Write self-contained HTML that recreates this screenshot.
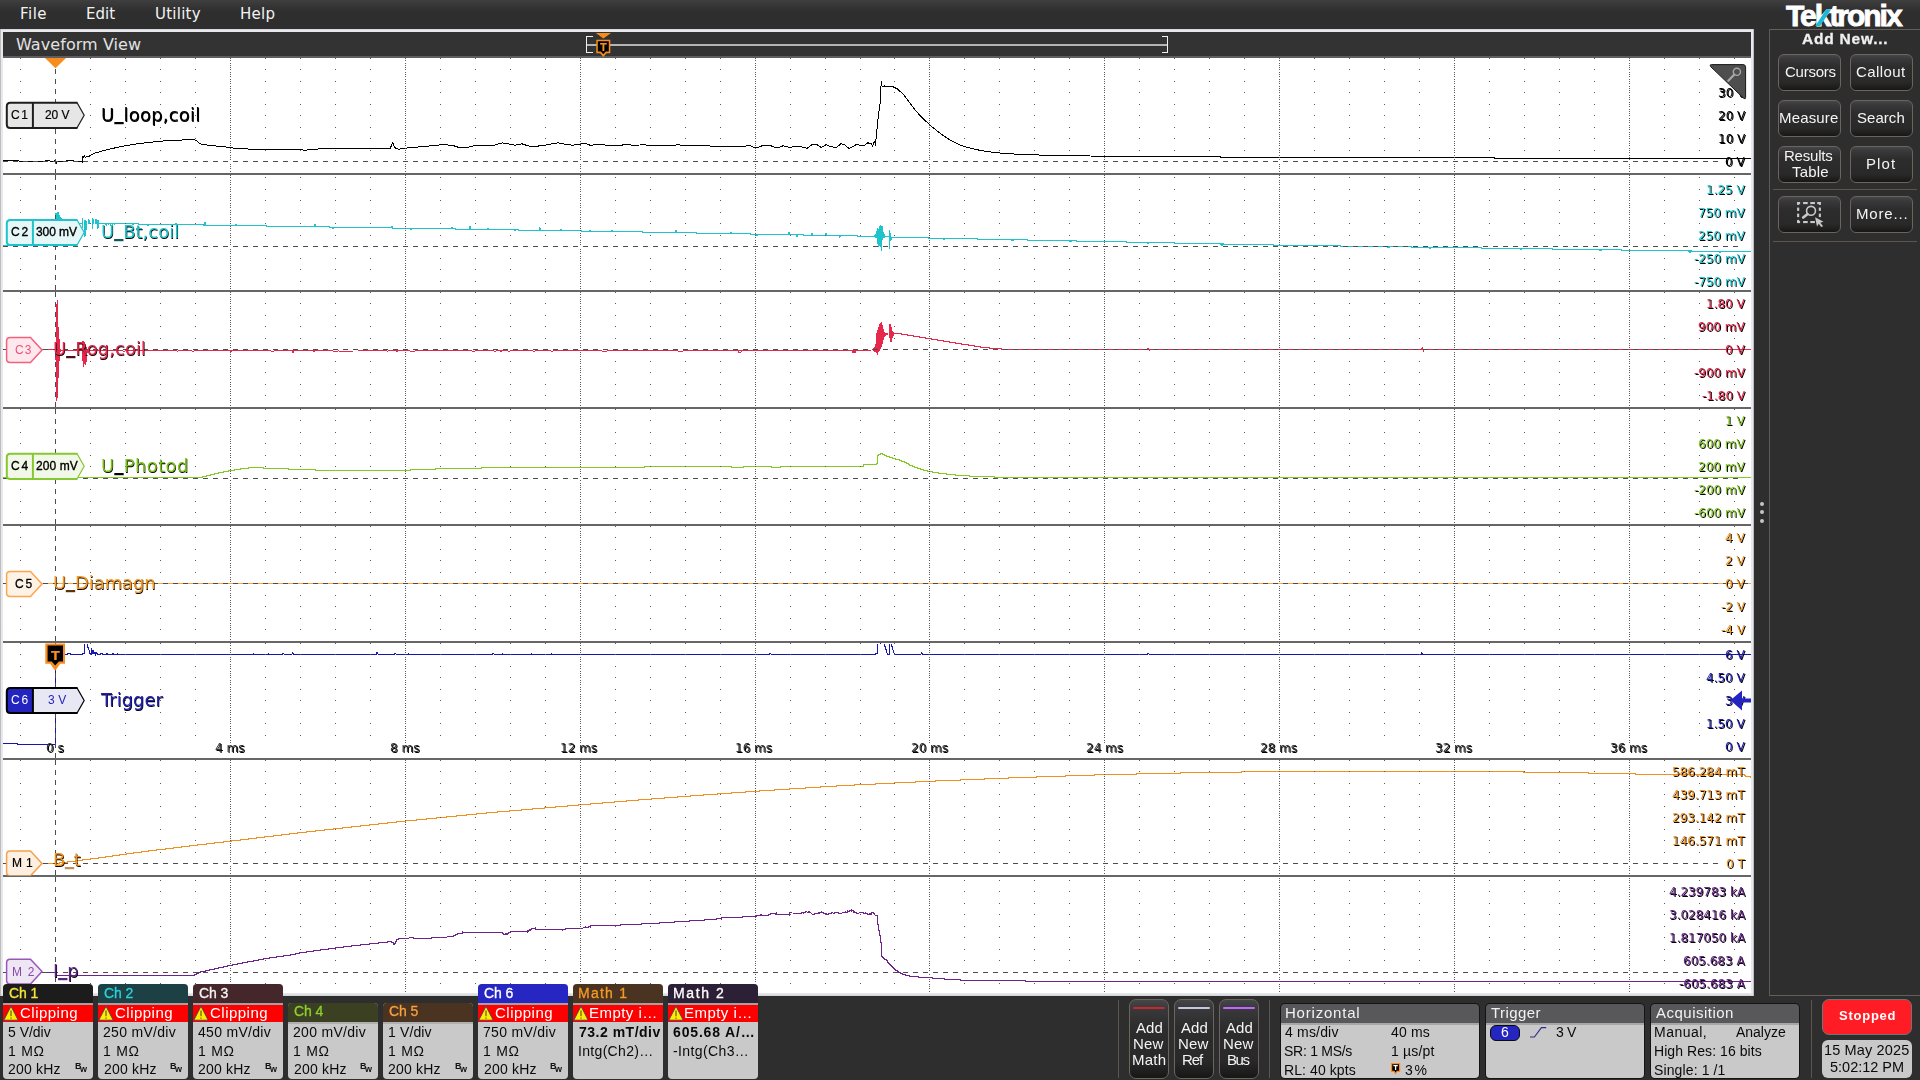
<!DOCTYPE html>
<html lang="en"><head><meta charset="utf-8"><title>Waveform View</title>
<style>
html,body{margin:0;padding:0}
body{width:1920px;height:1080px;background:#2e2e2e;position:relative;overflow:hidden;font-family:"Liberation Sans","DejaVu Sans",sans-serif}
div,.abs,.t{position:absolute}
.t{white-space:pre;display:block}
#menubar{left:0;top:0;width:1920px;height:28px;background:linear-gradient(#3f3f3f 0,#373737 5px,#303030 10px,#2e2e2e 14px,#2e2e2e 100%)}
#plot{left:0;top:0;width:1920px;height:1080px}
.btn{box-sizing:border-box;border:1px solid #6c645d;border-radius:6px;background:linear-gradient(#454648 0,#3a3a3c 10%,#2d2d2e 34%,#292929 78%,#1e1e1e 92%,#161616 100%)}
</style></head><body>
<div id="menubar">
<span class="t" style="left:20px;top:7px;font:normal 15px/15px 'DejaVu Sans',sans-serif;color:#f2f2f2;letter-spacing:0.47px;">File</span>
<span class="t" style="left:86px;top:7px;font:normal 15px/15px 'DejaVu Sans',sans-serif;color:#f2f2f2;letter-spacing:0.06px;">Edit</span>
<span class="t" style="left:155px;top:7px;font:normal 15px/15px 'DejaVu Sans',sans-serif;color:#f2f2f2;letter-spacing:0.25px;">Utility</span>
<span class="t" style="left:240px;top:7px;font:normal 15px/15px 'DejaVu Sans',sans-serif;color:#f2f2f2;letter-spacing:0.27px;">Help</span>
</div>
<span class="t logo" style="left:1786px;top:1px;font:bold 30px/30px 'Liberation Sans',sans-serif;color:#fff;letter-spacing:-2.03px;-webkit-text-stroke:0.9px #fff;">Tektronix</span>
<svg class="abs" style="left:1810px;top:0;width:30px;height:30px" viewBox="0 0 30 30"><path d="M5.2 26.1L16.2 9.4H21L10.2 26.1Z" fill="#1cb7d9"/></svg>
<div style="left:0px;top:29px;width:1754px;height:967px;background:linear-gradient(#d8d9dc 0,#d8d9dc 1px,#e8e9ec 1px,#e6e7ea 964px,#e4e5e8 965px,#cfd0d3 967px);"></div>
<div style="left:0px;top:29px;width:1px;height:967px;background:#bcbcbc;"></div>
<div style="left:1753px;top:29px;width:1px;height:967px;background:#bdbec2;"></div>
<div style="left:3px;top:32px;width:1748px;height:26px;background:linear-gradient(#333 0,#333 24px,#5e5e60 24px,#5e5e60 26px);"></div>
<span class="t" style="left:16px;top:37px;font:normal 16px/16px 'DejaVu Sans',sans-serif;color:#e2e2e2;letter-spacing:0.07px;">Waveform View</span>
<div style="left:3px;top:58px;width:1748px;height:935px;background:#fff;"></div>
<svg id="plot" class="abs" width="1920" height="1080" viewBox="0 0 1920 1080">
<defs><clipPath id="cp"><rect x="3" y="58" width="1748" height="935"/></clipPath><clipPath id="cm1"><rect x="0" y="760" width="100" height="115.5"/></clipPath></defs>
<path d="M592.5 36.5H586.5V52.5H592.5M1161.5 36.5H1167.5V52.5H1161.5" fill="none" stroke="#f0f0f0" stroke-width="1" shape-rendering="crispEdges"/>
<rect x="587" y="44" width="580" height="2" fill="#b4b4b4"/>
<path d="M595.8 33H611L603.4 38.4Z" fill="#f78d1e"/>
<path d="M596.3 39.8H610.3V53.3H606.5L603.3 57L600.1 53.3H596.3Z" fill="#f78d1e"/>
<path d="M597.8 41.3H608.8V51.6H605.8L603.3 54.3L600.8 51.6H597.8Z" fill="#000"/>
<g clip-path="url(#cp)">
<line x1="3" x2="1751" y1="583.5" y2="583.5" stroke="#ffa23c" stroke-width="1" shape-rendering="crispEdges"/>
<path d="M3.0 161.0L9.0 160.4L15.0 160.4L19.0 161.0L25.0 161.0L29.0 161.0L35.0 161.0L39.0 161.0L42.0 161.5L48.0 160.4L52.0 161.5L54.5 161.0L55.5 159.5L56.5 162.3L57.0 161.0L58.0 161.0L61.0 161.0L65.0 161.5L68.0 160.4L74.0 161.0L80.0 161.5L82.0 161.5L82.4 162.5L82.6 156.5L83.5 157.5L84.3 155.5L85.0 157.1L88.0 156.9L90.0 155.6L92.0 154.6L95.0 153.1L100.0 151.6L106.0 150.1L112.0 148.6L118.0 147.2L125.0 145.8L131.0 144.8L137.0 143.9L143.0 143.1L150.0 142.3L156.0 141.7L162.0 141.1L168.0 140.6L175.0 140.2L180.0 140.1L185.0 139.9L190.0 139.8L195.0 139.8L197.0 141.1L199.0 142.9L201.0 144.1L205.0 144.8L210.0 145.3L215.0 145.9L222.0 146.6L230.0 147.5L234.0 148.2L240.0 148.6L250.0 149.1L258.0 149.2L262.0 149.8L268.0 149.4L275.0 149.6L282.0 149.9L290.0 149.6L300.0 149.8L306.0 150.2L310.0 149.3L315.0 149.1L322.0 148.9L330.0 148.1L334.0 148.6L338.0 148.2L345.0 148.8L350.0 148.3L356.0 148.8L360.0 148.4L366.0 148.1L372.0 148.4L380.0 148.1L386.0 148.2L390.5 148.1L391.5 145.1L392.5 142.9L393.5 144.1L394.5 147.1L396.0 148.3L398.0 149.0L400.0 149.0L410.0 147.5L420.0 146.9L428.0 146.2L435.0 145.2L444.0 144.8L452.0 145.2L456.0 146.5L460.0 147.9L464.0 147.7L468.0 147.3L472.0 146.2L475.0 145.4L484.0 145.2L494.0 145.2L498.0 144.0L502.0 142.9L506.0 143.2L510.0 144.4L515.0 145.2L519.0 144.3L522.0 143.8L526.0 145.2L531.0 146.7L535.0 146.5L540.0 145.8L544.0 145.4L548.0 144.6L553.0 143.6L558.0 142.9L562.0 143.3L565.0 144.2L572.0 145.2L576.0 144.8L580.0 144.2L583.0 142.9L586.0 143.6L590.0 145.2L595.0 144.9L600.0 144.4L605.0 145.0L610.0 145.2L620.0 145.2L628.0 144.6L632.0 145.2L640.0 145.0L644.0 144.5L647.0 145.3L650.0 145.2L660.0 145.3L670.0 145.3L676.0 145.2L677.5 144.2L679.0 144.4L680.5 145.6L690.0 145.6L695.0 146.0L700.0 145.8L706.0 145.4L710.0 146.0L720.0 146.0L730.0 146.7L736.0 146.9L742.0 146.9L745.0 146.2L748.0 145.4L751.0 146.0L755.0 147.7L758.0 147.3L762.0 145.8L766.0 145.2L770.0 145.4L774.0 147.0L777.0 147.9L780.0 147.0L783.0 145.8L786.0 146.5L790.0 147.5L793.0 146.6L795.0 146.2L800.0 146.6L804.0 147.5L807.0 148.3L810.0 146.0L812.0 144.7L817.0 144.7L819.0 146.0L821.0 147.5L824.0 146.2L826.0 144.7L828.0 145.4L830.0 146.3L833.0 147.0L836.0 147.8L839.0 145.5L841.0 143.7L843.0 144.2L845.0 145.0L847.0 147.0L849.0 148.3L851.0 147.5L853.0 146.7L855.0 145.2L857.0 144.2L859.0 145.0L861.0 145.8L863.0 145.6L865.0 145.0L867.0 143.5L868.0 142.5L869.5 143.8L871.0 143.3L872.0 145.0L872.5 147.3L873.3 144.0L874.0 141.7L875.0 142.5L875.6 145.5L876.0 139.2L876.6 132.0L877.2 128.0L877.8 121.0L878.5 115.0L879.2 109.0L880.0 104.0L880.4 96.0L881.0 86.0L881.3 81.3L881.7 86.0L883.0 86.5L884.5 86.0L886.0 86.6L888.0 86.2L890.0 86.0L892.0 86.3L894.0 87.2L897.0 88.7L900.0 91.3L904.0 95.3L908.0 100.4L912.0 105.8L915.0 109.7L918.0 113.3L923.0 118.4L929.0 124.2L933.0 127.6L937.0 130.8L941.0 133.9L945.0 136.7L949.0 139.3L953.0 141.7L959.0 144.5L965.0 146.7L972.0 148.7L980.0 150.3L990.0 151.9L1000.0 153.0L1010.0 153.8L1020.0 154.3L1035.0 154.9L1050.0 155.3L1070.0 155.7L1090.0 156.0L1120.0 156.5L1220.0 156.5L1220.0 157.0L1368.0 157.0L1368.0 157.5L1494.0 157.5L1494.0 158.0L1638.0 158.0L1638.0 158.5L1751.0 158.5" stroke="#000000" stroke-width="1" fill="none" shape-rendering="crispEdges" />
<path d="M3.0 245.4L55.3 245.4L55.3 220.0" stroke="#1fc3cb" stroke-width="1" fill="none" shape-rendering="crispEdges" />
<path d="M62.0 223.3L82.0 223.3" stroke="#1fc3cb" stroke-width="1" fill="none" shape-rendering="crispEdges" />
<path d="M82.6 223.0L82.6 227.5" stroke="#1fc3cb" stroke-width="1" fill="none" shape-rendering="crispEdges" />
<path d="M84.6 223.0L84.6 236.7" stroke="#1fc3cb" stroke-width="1" fill="none" shape-rendering="crispEdges" />
<path d="M85.7 223.0L85.7 236.0" stroke="#1fc3cb" stroke-width="1" fill="none" shape-rendering="crispEdges" />
<path d="M86.5 223.0L86.5 230.0" stroke="#1fc3cb" stroke-width="1" fill="none" shape-rendering="crispEdges" />
<path d="M92.5 223.0L92.5 228.7" stroke="#1fc3cb" stroke-width="1" fill="none" shape-rendering="crispEdges" />
<path d="M97.5 223.0L97.5 228.7" stroke="#1fc3cb" stroke-width="1" fill="none" shape-rendering="crispEdges" />
<path d="M98.9 223.0L98.9 228.3" stroke="#1fc3cb" stroke-width="1" fill="none" shape-rendering="crispEdges" />
<path d="M99.3 223.3L104.5 223.3L104.8 223.3L105.1 224.6L105.6 223.3L106.5 223.3L106.8 224.6L107.3 223.3L108.6 223.3L108.9 224.6L109.4 223.3L110.2 223.3L110.5 224.6L111.0 223.3L112.4 223.3L112.7 224.6L113.2 223.3L114.0 223.3L114.3 224.6L114.8 223.3" stroke="#1fc3cb" stroke-width="1" fill="none" shape-rendering="crispEdges" />
<path d="M114.8 223.5L138.8 223.5L138.8 224.0L171.8 224.0L171.8 224.5L203.3 224.5L203.3 225.0L234.8 225.0L234.8 225.5L266.3 225.5L266.3 226.0L297.8 226.0L297.8 226.5L329.3 226.5L329.3 227.0L360.8 227.0L360.8 227.5L392.3 227.5L392.3 228.0L423.8 228.0L423.8 228.5L455.3 228.5L455.3 229.0L486.8 229.0L486.8 229.5L518.3 229.5L518.3 230.0L549.8 230.0L549.8 230.5L581.3 230.5L581.3 231.0L612.8 231.0L612.8 231.5L642.8 231.5L642.8 232.0L669.8 232.0L669.8 232.5L696.8 232.5L696.8 233.0L723.8 233.0L723.8 233.5L750.8 233.5L750.8 234.0L777.8 234.0L777.8 234.5L803.3 234.5L803.3 235.0L830.3 235.0L830.3 235.5L857.3 235.5L857.3 236.0L874.5 236.0" stroke="#1fc3cb" stroke-width="1" fill="none" shape-rendering="crispEdges" />
<path d="M874.5 236.1L875.0 234.9L875.3 237.2L875.6 233.9L875.9 237.5L876.2 232.3L876.5 238.2L876.8 231.5L877.1 239.0L877.4 229.3L877.7 244.1L878.0 228.0L878.3 244.8L878.6 229.8L878.9 247.2L879.2 231.4L879.5 246.1L879.8 226.0L880.1 247.1L880.4 225.5L880.7 245.7L881.0 225.2L881.3 250.8L881.6 226.1L881.9 240.6L882.2 226.5L882.5 239.9L882.8 230.1L883.1 238.3L883.4 231.8L883.7 238.0L884.0 233.5L884.3 237.5L884.6 234.1L884.9 237.1L885.0 236.6L889.0 237.0L889.3 230.0L889.6 249.0L890.0 233.0L890.4 241.0L890.8 236.0L891.5 238.5L892.0 237.2L895.0 237.4" stroke="#1fc3cb" stroke-width="1" fill="none" shape-rendering="crispEdges" />
<path d="M895.0 237.1L902.5 237.1L902.5 237.6L928.0 237.6L928.0 238.1L952.0 238.1L952.0 238.6L977.5 238.6L977.5 239.1L1001.5 239.1L1001.5 239.6L1027.0 239.6L1027.0 240.1L1051.0 240.1L1051.0 240.6L1076.5 240.6L1076.5 241.1L1100.5 241.1L1100.5 241.6L1126.0 241.6L1126.0 242.1L1150.0 242.1L1150.0 242.6L1174.0 242.6L1174.0 243.1L1199.5 243.1L1199.5 243.6L1223.5 243.6L1223.5 244.1L1249.0 244.1L1249.0 244.6L1273.0 244.6L1273.0 245.1L1306.0 245.1L1306.0 245.6L1340.5 245.6L1340.5 246.1L1375.0 246.1L1375.0 246.6L1411.0 246.6L1411.0 247.1L1445.5 247.1L1445.5 247.6L1481.5 247.6L1481.5 248.1L1516.0 248.1L1516.0 248.6L1552.0 248.6L1552.0 249.1L1586.5 249.1L1586.5 249.6L1621.0 249.6L1621.0 250.1L1657.0 250.1L1657.0 250.6L1691.5 250.6L1691.5 251.1L1727.5 251.1L1727.5 251.6L1751.0 251.6" stroke="#1fc3cb" stroke-width="1" fill="none" shape-rendering="crispEdges" />
<path d="M132.0 223.7L133.0 224.9L134.0 223.7" stroke="#1fc3cb" stroke-width="1" fill="none" shape-rendering="crispEdges" />
<path d="M147.0 223.9L148.0 225.9L149.0 223.9" stroke="#1fc3cb" stroke-width="1" fill="none" shape-rendering="crispEdges" />
<path d="M175.0 224.3L176.0 223.1L177.0 224.3" stroke="#1fc3cb" stroke-width="1" fill="none" shape-rendering="crispEdges" />
<path d="M204.0 224.8L205.0 222.3L206.0 224.8" stroke="#1fc3cb" stroke-width="1" fill="none" shape-rendering="crispEdges" />
<path d="M235.0 225.3L236.0 224.3L237.0 225.3" stroke="#1fc3cb" stroke-width="1" fill="none" shape-rendering="crispEdges" />
<path d="M289.0 226.1L290.0 227.1L291.0 226.1" stroke="#1fc3cb" stroke-width="1" fill="none" shape-rendering="crispEdges" />
<path d="M314.0 226.5L315.0 224.0L316.0 226.5" stroke="#1fc3cb" stroke-width="1" fill="none" shape-rendering="crispEdges" />
<path d="M332.0 226.8L333.0 229.3L334.0 226.8" stroke="#1fc3cb" stroke-width="1" fill="none" shape-rendering="crispEdges" />
<path d="M364.0 227.3L365.0 228.3L366.0 227.3" stroke="#1fc3cb" stroke-width="1" fill="none" shape-rendering="crispEdges" />
<path d="M391.0 227.8L392.0 226.3L393.0 227.8" stroke="#1fc3cb" stroke-width="1" fill="none" shape-rendering="crispEdges" />
<path d="M410.0 228.1L411.0 229.6L412.0 228.1" stroke="#1fc3cb" stroke-width="1" fill="none" shape-rendering="crispEdges" />
<path d="M451.0 228.7L452.0 226.7L453.0 228.7" stroke="#1fc3cb" stroke-width="1" fill="none" shape-rendering="crispEdges" />
<path d="M469.0 229.0L470.0 226.5L471.0 229.0" stroke="#1fc3cb" stroke-width="1" fill="none" shape-rendering="crispEdges" />
<path d="M487.0 229.3L488.0 228.3L489.0 229.3" stroke="#1fc3cb" stroke-width="1" fill="none" shape-rendering="crispEdges" />
<path d="M514.0 229.7L515.0 230.9L516.0 229.7" stroke="#1fc3cb" stroke-width="1" fill="none" shape-rendering="crispEdges" />
<path d="M539.0 230.1L540.0 227.6L541.0 230.1" stroke="#1fc3cb" stroke-width="1" fill="none" shape-rendering="crispEdges" />
<path d="M560.0 230.4L561.0 228.9L562.0 230.4" stroke="#1fc3cb" stroke-width="1" fill="none" shape-rendering="crispEdges" />
<path d="M589.0 230.9L590.0 229.9L591.0 230.9" stroke="#1fc3cb" stroke-width="1" fill="none" shape-rendering="crispEdges" />
<path d="M611.0 231.3L612.0 229.8L613.0 231.3" stroke="#1fc3cb" stroke-width="1" fill="none" shape-rendering="crispEdges" />
<path d="M647.0 231.8L648.0 233.3L649.0 231.8" stroke="#1fc3cb" stroke-width="1" fill="none" shape-rendering="crispEdges" />
<path d="M675.0 232.4L676.0 230.4L677.0 232.4" stroke="#1fc3cb" stroke-width="1" fill="none" shape-rendering="crispEdges" />
<path d="M702.0 232.9L703.0 234.1L704.0 232.9" stroke="#1fc3cb" stroke-width="1" fill="none" shape-rendering="crispEdges" />
<path d="M730.0 233.4L731.0 231.9L732.0 233.4" stroke="#1fc3cb" stroke-width="1" fill="none" shape-rendering="crispEdges" />
<path d="M756.0 233.9L757.0 235.4L758.0 233.9" stroke="#1fc3cb" stroke-width="1" fill="none" shape-rendering="crispEdges" />
<path d="M788.0 234.5L789.0 232.5L790.0 234.5" stroke="#1fc3cb" stroke-width="1" fill="none" shape-rendering="crispEdges" />
<path d="M796.0 234.6L797.0 236.6L798.0 234.6" stroke="#1fc3cb" stroke-width="1" fill="none" shape-rendering="crispEdges" />
<path d="M811.0 234.9L812.0 233.4L813.0 234.9" stroke="#1fc3cb" stroke-width="1" fill="none" shape-rendering="crispEdges" />
<path d="M825.0 235.2L826.0 233.2L827.0 235.2" stroke="#1fc3cb" stroke-width="1" fill="none" shape-rendering="crispEdges" />
<path d="M839.0 235.4L840.0 237.4L841.0 235.4" stroke="#1fc3cb" stroke-width="1" fill="none" shape-rendering="crispEdges" />
<path d="M857.0 235.8L858.0 237.0L859.0 235.8" stroke="#1fc3cb" stroke-width="1" fill="none" shape-rendering="crispEdges" />
<path d="M942.5 238.2L944.0 239.7L945.5 238.7" stroke="#1fc3cb" stroke-width="1" fill="none" shape-rendering="crispEdges" />
<path d="M1010.5 239.6L1012.0 241.1L1013.5 240.1" stroke="#1fc3cb" stroke-width="1" fill="none" shape-rendering="crispEdges" />
<path d="M1068.5 240.7L1070.0 242.2L1071.5 241.2" stroke="#1fc3cb" stroke-width="1" fill="none" shape-rendering="crispEdges" />
<path d="M1146.5 242.3L1148.0 243.8L1149.5 242.8" stroke="#1fc3cb" stroke-width="1" fill="none" shape-rendering="crispEdges" />
<path d="M1220.5 243.8L1222.0 245.3L1223.5 244.3" stroke="#1fc3cb" stroke-width="1" fill="none" shape-rendering="crispEdges" />
<path d="M1303.5 245.4L1305.0 246.9L1306.5 245.9" stroke="#1fc3cb" stroke-width="1" fill="none" shape-rendering="crispEdges" />
<path d="M1386.5 246.5L1388.0 248.0L1389.5 247.0" stroke="#1fc3cb" stroke-width="1" fill="none" shape-rendering="crispEdges" />
<path d="M1428.5 247.1L1430.0 248.6L1431.5 247.6" stroke="#1fc3cb" stroke-width="1" fill="none" shape-rendering="crispEdges" />
<path d="M1519.5 248.4L1521.0 249.9L1522.5 248.9" stroke="#1fc3cb" stroke-width="1" fill="none" shape-rendering="crispEdges" />
<path d="M1598.5 249.6L1600.0 251.1L1601.5 250.1" stroke="#1fc3cb" stroke-width="1" fill="none" shape-rendering="crispEdges" />
<path d="M1688.5 250.8L1690.0 252.3L1691.5 251.3" stroke="#1fc3cb" stroke-width="1" fill="none" shape-rendering="crispEdges" />
<path d="M1718.5 251.3L1720.0 252.8L1721.5 251.8" stroke="#1fc3cb" stroke-width="1" fill="none" shape-rendering="crispEdges" />
<path d="M55.0 220.0L55.2 213.6L56.4 213.0L57.2 212.2L58.5 212.0L59.2 214.5L60.0 216.5L61.0 218.0L62.6 219.3L63.0 220.0Z" fill="#1fc3cb" stroke="none" shape-rendering="crispEdges"/>
<path d="M82.0 224.2L82.0 220.4L82.4 218.2L83.1 219.4L83.3 220.0L83.3 224.2Z" fill="#1fc3cb" stroke="none" shape-rendering="crispEdges"/>
<path d="M84.1 224.2L84.1 221.2L85.1 219.0L85.8 220.2L86.7 220.8L86.7 224.2Z" fill="#1fc3cb" stroke="none" shape-rendering="crispEdges"/>
<path d="M87.8 224.2L87.8 220.5L88.6 218.3L89.3 219.5L90.1 220.1L90.1 224.2Z" fill="#1fc3cb" stroke="none" shape-rendering="crispEdges"/>
<path d="M91.8 224.2L91.8 220.2L92.6 218.0L93.3 219.2L94.0 219.8L94.0 224.2Z" fill="#1fc3cb" stroke="none" shape-rendering="crispEdges"/>
<path d="M94.7 224.2L94.7 220.2L95.9 218.0L96.6 219.2L97.6 219.8L97.6 224.2Z" fill="#1fc3cb" stroke="none" shape-rendering="crispEdges"/>
<path d="M98.2 224.2L98.2 221.7L98.5 219.5L99.2 220.7L99.3 221.3L99.3 224.2Z" fill="#1fc3cb" stroke="none" shape-rendering="crispEdges"/>
<path d="M3.0 349.5L55.0 349.5" stroke="#e5284b" stroke-width="1" fill="none" shape-rendering="crispEdges" />
<path d="M60.5 350.5L65.0 350.5L70.0 350.5L72.0 350.5L76.0 350.5L83.0 350.5L85.0 350.5L90.0 351.0L92.0 350.5L94.0 351.0L96.0 350.5L99.0 350.5L106.0 351.0L108.0 350.5L110.0 350.5L114.0 351.0L117.0 350.5L124.0 351.1L131.0 350.5L133.0 350.5L137.0 350.5L144.0 350.5L151.0 350.5L158.0 350.5L163.0 351.0L167.0 350.8L174.0 350.8L178.0 351.1L181.0 350.5L190.0 350.5L192.0 351.1L199.0 350.8L203.0 350.8L207.0 350.5L209.0 351.0L212.0 350.2L215.0 350.8L220.0 350.5L229.0 350.5L236.0 350.2L240.0 350.2L247.0 350.8L254.0 350.8L256.0 350.5L260.0 350.8L269.0 350.5L271.0 351.1L280.0 350.8L284.0 351.0L293.0 350.2L295.0 350.8L299.0 350.5L306.0 350.5L311.0 350.5L314.0 351.1L317.0 350.5L322.0 351.0L327.0 350.5L330.0 350.8L335.0 351.1L338.0 351.0L345.0 351.1L354.0 351.0L358.0 351.0L361.0 350.5L363.0 350.5L366.0 350.5L375.0 350.5L377.0 350.8L384.0 350.5L388.0 351.1L390.0 350.5L395.0 350.2L402.0 350.2L405.0 350.5L410.0 351.0L415.0 351.0L420.0 350.5L425.0 351.0L427.0 350.5L429.0 350.5L434.0 350.5L436.0 350.2L443.0 350.5L445.0 350.5L452.0 350.5L459.0 350.5L463.0 350.5L465.0 350.5L472.0 351.0L475.0 351.1L479.0 350.2L484.0 350.5L486.0 350.8L491.0 350.8L496.0 351.1L498.0 350.5L500.0 350.2L509.0 351.1L514.0 350.5L521.0 350.5L524.0 350.2L527.0 350.5L534.0 351.1L543.0 350.5L552.0 351.1L559.0 350.2L562.0 350.2L565.0 350.2L574.0 350.5L581.0 350.5L584.0 351.0L593.0 350.5L596.0 350.8L600.0 350.5L602.0 351.1L607.0 351.1L610.0 350.2L615.0 350.2L619.0 350.5L622.0 350.5L625.0 350.8L628.0 350.2L631.0 350.8L638.0 350.5L643.0 350.2L652.0 350.5L661.0 350.5L666.0 350.5L671.0 350.5L676.0 350.2L678.0 351.0L683.0 351.0L692.0 350.5L701.0 350.5L704.0 350.5L706.0 350.5L713.0 350.8L722.0 350.5L729.0 350.8L738.0 350.2L741.0 350.5L743.0 350.5L752.0 350.5L759.0 350.5L764.0 350.5L767.0 350.5L771.0 350.5L775.0 350.5L782.0 350.2L786.0 351.0L789.0 350.5L798.0 350.2L803.0 351.0L810.0 350.5L817.0 350.5L824.0 350.5L829.0 350.5L836.0 350.5L839.0 350.5L842.0 350.8L849.0 350.5L856.0 350.5L860.0 350.8L862.0 350.5L865.0 350.5L869.0 350.5L871.0 350.8L870.0 350.5" stroke="#e5284b" stroke-width="1" fill="none" shape-rendering="crispEdges" />
<path d="M895.0 333.0L898.0 333.0L898.0 333.5L901.0 333.5L901.0 334.0L904.0 334.0L904.0 334.5L907.0 334.5L907.0 335.0L910.0 335.0L910.0 335.5L913.0 335.5L913.0 336.0L916.0 336.0L916.0 336.5L919.0 336.5L919.0 337.0L922.0 337.0L922.0 337.5L925.0 337.5L925.0 338.0L928.0 338.0L928.0 338.5L931.0 338.5L931.0 339.0L934.0 339.0L934.0 339.5L937.0 339.5L937.0 340.0L940.0 340.0L940.0 340.5L943.0 340.5L943.0 341.0L946.0 341.0L946.0 341.5L949.0 341.5L949.0 342.0L952.0 342.0L952.0 342.5L955.0 342.5L955.0 343.0L958.0 343.0L958.0 343.5L961.0 343.5L961.0 344.0L965.5 344.0L965.5 344.5L968.5 344.5L968.5 345.0L971.5 345.0L971.5 345.5L974.5 345.5L974.5 346.0L977.5 346.0L977.5 346.5L980.5 346.5L980.5 347.0L985.0 347.0L985.0 347.5L989.5 347.5L989.5 348.0L995.5 348.0L995.5 348.5L1001.5 348.5L1001.5 349.0L1009.0 349.0L1009.0 349.5L1060.0 349.5" stroke="#e5284b" stroke-width="1" fill="none" shape-rendering="crispEdges" />
<path d="M1060.0 349.5L1751.0 349.5" stroke="#e5284b" stroke-width="1" fill="none" shape-rendering="crispEdges" />
<path d="M1147.0 349.5L1148.0 348.0L1149.0 350.3L1150.0 349.5" stroke="#e5284b" stroke-width="1" fill="none" shape-rendering="crispEdges" />
<path d="M1421.5 349.5L1422.5 347.7L1423.5 351.1L1424.5 349.5" stroke="#e5284b" stroke-width="1" fill="none" shape-rendering="crispEdges" />
<path d="M292.0 350.5L293.0 352.5L294.0 350.5" stroke="#e5284b" stroke-width="1" fill="none" shape-rendering="crispEdges" />
<path d="M230.0 350.5L231.0 352.0L233.0 350.5" stroke="#e5284b" stroke-width="1" fill="none" shape-rendering="crispEdges" />
<path d="M395.0 350.5L396.0 349.0L397.0 351.5L398.0 350.5" stroke="#e5284b" stroke-width="1" fill="none" shape-rendering="crispEdges" />
<path d="M500.0 350.5L501.0 352.0L502.0 350.5" stroke="#e5284b" stroke-width="1" fill="none" shape-rendering="crispEdges" />
<path d="M738.0 350.5L739.0 352.5L741.0 352.0L742.0 350.5" stroke="#e5284b" stroke-width="1" fill="none" shape-rendering="crispEdges" />
<path d="M852.0 350.5L853.0 353.0L854.0 349.5L855.0 352.5L856.0 350.5" stroke="#e5284b" stroke-width="1" fill="none" shape-rendering="crispEdges" />
<path d="M55.3 350.5L55.8 330.0L56.6 301.0L57.6 300.0L58.2 318.0L58.6 330.0L59.4 338.0L60.2 345.0L60.6 350.0L60.2 357.0L59.3 362.0L58.8 372.0L58.2 385.0L57.6 398.0L56.6 401.0L56.0 401.0L55.8 380.0L55.5 360.0Z" fill="#e5284b" stroke="none" shape-rendering="crispEdges"/>
<path d="M81.5 350.5L82.0 343.0L82.8 340.5L84.0 341.5L85.0 343.0L86.2 346.0L87.2 349.0L88.2 351.0L87.0 354.0L86.5 362.0L85.8 367.5L85.0 360.0L84.2 366.0L83.2 368.0L82.4 360.0L82.0 352.0Z" fill="#e5284b" stroke="none" shape-rendering="crispEdges"/>
<path d="M870.0 350.5L873.0 349.0L874.0 347.0L875.4 346.0L876.0 336.0L877.0 331.0L878.2 328.0L879.2 325.0L880.0 323.5L881.0 322.0L882.0 322.0L882.6 325.0L883.2 328.0L884.0 331.0L885.0 332.5L886.0 333.2L888.0 333.5L888.0 334.5L886.0 335.0L884.5 336.5L883.5 340.0L882.8 343.0L881.8 346.0L880.6 349.0L879.6 350.5L878.6 352.0L877.8 354.8L877.0 354.5L876.2 352.0L875.2 352.5L874.0 351.5L873.0 350.5L870.0 350.3Z" fill="#e5284b" stroke="none" shape-rendering="crispEdges"/>
<path d="M889.0 333.5L889.0 324.0L891.0 324.0L891.2 327.0L892.0 327.2L892.2 331.0L893.6 332.3L895.5 332.8L895.5 333.8L894.0 334.5L893.0 337.0L892.0 340.0L891.2 342.8L890.4 342.0L889.6 339.0L889.0 335.0Z" fill="#e5284b" stroke="none" shape-rendering="crispEdges"/>
<path d="M3.0 477.5L200.0 477.5L200.0 477.0L202.0 477.0L202.0 476.5L204.0 476.5L204.0 476.0L206.0 476.0L206.0 475.5L208.0 475.5L208.0 475.0L210.0 475.0L210.0 474.5L212.0 474.5L212.0 474.0L214.0 474.0L214.0 473.5L216.0 473.5L216.0 473.0L218.0 473.0L218.0 472.5L221.0 472.5L221.0 472.0L223.0 472.0L223.0 471.5L226.0 471.5L226.0 471.0L228.0 471.0L228.0 470.5L231.0 470.5L231.0 470.0L234.0 470.0L234.0 469.5L237.0 469.5L237.0 469.0L240.0 469.0L240.0 468.5L244.0 468.5L244.0 468.0L248.0 468.0L248.0 467.5L263.0 467.5L263.0 468.5L288.0 468.5L288.0 469.5L315.0 469.5L315.0 470.5L409.0 470.5L409.0 470.0L410.0 470.0L410.0 469.5L435.0 469.5L435.0 468.5L481.0 468.5L481.0 467.5L561.0 467.5L561.0 467.0L644.0 467.0L644.0 466.5L731.0 466.5L731.0 467.5L743.0 467.5L743.0 466.5L771.0 466.5L771.0 467.5L780.0 467.5L780.0 466.5L811.0 466.5L811.0 466.0L863.0 466.0L863.0 464.5L876.0 464.5L876.0 463.0L877.0 463.0L877.0 455.5L878.0 455.5L878.0 454.5L879.0 454.5L879.0 454.0L880.0 454.0L880.0 453.5L882.0 453.5L882.0 454.0L883.0 454.0L883.0 454.5L884.0 454.5L884.0 455.0L885.0 455.0L885.0 455.5L886.0 455.5L886.0 456.0L888.0 456.0L888.0 456.5L889.0 456.5L889.0 457.0L890.0 457.0L890.0 457.5L892.0 457.5L892.0 458.0L893.0 458.0L893.0 458.5L895.0 458.5L895.0 459.0L897.0 459.0L897.0 459.5L899.0 459.5L899.0 460.0L900.0 460.0L900.0 460.5L901.0 460.5L901.0 461.0L902.0 461.0L902.0 461.5L904.0 461.5L904.0 462.0L905.0 462.0L905.0 462.5L906.0 462.5L906.0 463.0L907.0 463.0L907.0 463.5L908.0 463.5L908.0 464.5L909.0 464.5L909.0 465.0L910.0 465.0L910.0 465.5L912.0 465.5L912.0 466.0L913.0 466.0L913.0 466.5L914.0 466.5L914.0 467.0L916.0 467.0L916.0 467.5L917.0 467.5L917.0 468.0L918.0 468.0L918.0 468.5L920.0 468.5L920.0 469.0L921.0 469.0L921.0 469.5L923.0 469.5L923.0 470.0L925.0 470.0L925.0 470.5L927.0 470.5L927.0 471.0L929.0 471.0L929.0 471.5L932.0 471.5L932.0 472.0L935.0 472.0L935.0 472.5L938.0 472.5L938.0 473.0L942.0 473.0L942.0 473.5L946.0 473.5L946.0 474.0L950.0 474.0L950.0 474.5L955.0 474.5L955.0 475.0L961.0 475.0L961.0 475.5L969.0 475.5L969.0 476.0L982.0 476.0L982.0 476.5L994.0 476.5L994.0 477.0L1426.0 477.0L1426.0 477.5L1751.0 477.5" stroke="#84c824" stroke-width="1" fill="none" shape-rendering="crispEdges" />
<path d="M3.0 743.4L17.0 743.4L17.5 744.3L55.5 744.3L55.5 654.5" stroke="#1616b2" stroke-width="1" fill="none" shape-rendering="crispEdges" />
<path d="M55.5 654.5L67.0 654.5L67.3 653.5L70.0 653.5L70.3 654.5L82.5 654.5L83.0 653.6L84.2 653.6L84.3 644.2" stroke="#1616b2" stroke-width="1" fill="none" shape-rendering="crispEdges" />
<path d="M87.0 643.6L87.4 646.0L88.0 647.5L88.5 649.5L89.2 650.5L89.8 653.0L90.5 654.5L91.5 654.5L91.8 649.5L92.4 650.5L92.8 652.5L93.5 651.0L94.0 653.5L95.0 652.5L95.6 654.5L96.5 652.6L97.3 653.0L98.0 654.5L100.0 654.5L100.4 653.5L102.0 653.5L102.4 654.5L106.5 654.5L106.8 653.3L107.8 653.3L108.0 654.5L112.8 654.5L113.0 653.5L113.6 654.5L117.0 654.5L117.3 653.5L117.8 654.5L252.5 654.5L253.0 653.7L253.8 654.1L254.2 654.5L267.5 654.5L268.0 653.7L268.8 654.1L269.2 654.5L282.5 654.5L283.0 653.5L283.8 654.0L284.2 654.5L292.0 654.5L292.5 652.5L293.3 653.5L293.7 654.5L376.5 654.5L377.0 652.0L377.8 653.2L378.2 654.5L394.5 654.5L395.0 653.3L395.8 653.9L396.2 654.5L407.5 654.5L408.0 653.7L408.8 654.1L409.2 654.5L492.5 654.5L493.0 653.5L493.8 654.0L494.2 654.5L501.5 654.5L502.0 653.7L502.8 654.1L503.2 654.5L530.5 654.5L531.0 653.7L531.8 654.1L532.2 654.5L550.5 654.5L551.0 653.7L551.8 654.1L552.2 654.5L769.5 654.5L770.0 653.3L770.8 653.9L771.2 654.5L875.5 654.5L876.0 653.3L877.5 653.5L877.5 644.1" stroke="#1616b2" stroke-width="1" fill="none" shape-rendering="crispEdges" />
<path d="M880.3 643.6L880.8 644.0" stroke="#1616b2" stroke-width="1" fill="none" shape-rendering="crispEdges" />
<path d="M884.3 643.6L884.8 645.0L885.0 646.5L885.5 647.5L885.7 649.0L886.3 650.0L886.6 652.0L887.2 653.0L887.6 654.5L889.5 654.5L889.5 644.2" stroke="#1616b2" stroke-width="1" fill="none" shape-rendering="crispEdges" />
<path d="M891.3 643.6L891.8 645.0L892.0 646.5L892.5 647.5L892.8 649.5L893.4 650.5L893.8 652.5L894.4 653.2L894.8 654.5L920.9 654.5L921.4 653.0L922.2 653.9L922.6 654.5L1147.5 654.5L1148.0 653.3L1148.8 654.0L1149.2 654.5L1421.2 654.5L1421.7 653.3L1422.5 654.0L1422.9 654.5L1751.0 654.5" stroke="#1616b2" stroke-width="1" fill="none" shape-rendering="crispEdges" />
<path d="M42.0 863.5L59.0 863.5L59.0 862.5L67.0 862.5L67.0 861.5L75.0 861.5L75.0 860.5L82.0 860.5L82.0 859.5L90.0 859.5L90.0 858.5L98.0 858.5L98.0 857.5L105.0 857.5L105.0 856.5L112.0 856.5L112.0 855.5L119.0 855.5L119.0 854.5L126.0 854.5L126.0 853.5L133.0 853.5L133.0 852.5L141.0 852.5L141.0 851.5L148.0 851.5L148.0 850.5L156.0 850.5L156.0 849.5L165.0 849.5L165.0 848.5L173.0 848.5L173.0 847.5L181.0 847.5L181.0 846.5L189.0 846.5L189.0 845.5L197.0 845.5L197.0 844.5L206.0 844.5L206.0 843.5L214.0 843.5L214.0 842.5L223.0 842.5L223.0 841.5L231.0 841.5L231.0 840.5L240.0 840.5L240.0 839.5L248.0 839.5L248.0 838.5L256.0 838.5L256.0 837.5L264.0 837.5L264.0 836.5L273.0 836.5L273.0 835.5L281.0 835.5L281.0 834.5L289.0 834.5L289.0 833.5L297.0 833.5L297.0 832.5L306.0 832.5L306.0 831.5L315.0 831.5L315.0 830.5L324.0 830.5L324.0 829.5L333.0 829.5L333.0 828.5L342.0 828.5L342.0 827.5L351.0 827.5L351.0 826.5L360.0 826.5L360.0 825.5L369.0 825.5L369.0 824.5L378.0 824.5L378.0 823.5L387.0 823.5L387.0 822.5L396.0 822.5L396.0 821.5L405.0 821.5L405.0 820.5L416.0 820.5L416.0 819.5L426.0 819.5L426.0 818.5L436.0 818.5L436.0 817.5L446.0 817.5L446.0 816.5L456.0 816.5L456.0 815.5L466.0 815.5L466.0 814.5L476.0 814.5L476.0 813.5L486.0 813.5L486.0 812.5L497.0 812.5L497.0 811.5L509.0 811.5L509.0 810.5L521.0 810.5L521.0 809.5L532.0 809.5L532.0 808.5L544.0 808.5L544.0 807.5L555.0 807.5L555.0 806.5L567.0 806.5L567.0 805.5L578.0 805.5L578.0 804.5L590.0 804.5L590.0 803.5L602.0 803.5L602.0 802.5L614.0 802.5L614.0 801.5L626.0 801.5L626.0 800.5L638.0 800.5L638.0 799.5L651.0 799.5L651.0 798.5L664.0 798.5L664.0 797.5L677.0 797.5L677.0 796.5L690.0 796.5L690.0 795.5L703.0 795.5L703.0 794.5L717.0 794.5L717.0 793.5L731.0 793.5L731.0 792.5L745.0 792.5L745.0 791.5L759.0 791.5L759.0 790.5L774.0 790.5L774.0 789.5L789.0 789.5L789.0 788.5L805.0 788.5L805.0 787.5L820.0 787.5L820.0 786.5L836.0 786.5L836.0 785.5L854.0 785.5L854.0 784.5L875.0 784.5L875.0 783.5L894.0 783.5L894.0 782.5L915.0 782.5L915.0 781.5L935.0 781.5L935.0 780.5L960.0 780.5L960.0 779.5L984.0 779.5L984.0 778.5L1008.0 778.5L1008.0 777.5L1036.0 777.5L1036.0 776.5L1065.0 776.5L1065.0 775.5L1094.0 775.5L1094.0 774.5L1136.0 774.5L1136.0 773.5L1180.0 773.5L1180.0 772.5L1241.0 772.5L1241.0 771.5L1523.0 771.5L1523.0 772.5L1588.0 772.5L1588.0 773.5L1635.0 773.5L1635.0 774.5L1744.0 774.5L1744.0 775.5L1745.0 775.5L1745.0 776.5L1750.0 776.5L1750.0 777.5L1751.0 777.5" stroke="#f0901f" stroke-width="1" fill="none" shape-rendering="crispEdges" />
<path d="M3.0 972.5L56.0 972.5L56.0 975.0L139.0 975.0L139.0 975.5L193.0 975.5L193.0 975.0L194.0 975.0L194.0 974.5L195.0 974.5L195.0 974.0L196.0 974.0L196.0 973.5L197.0 973.5L197.0 973.0L198.0 973.0L198.0 972.5L199.0 972.5L199.0 972.0L200.0 972.0L200.0 971.5L202.0 971.5L202.0 971.0L205.0 971.0L205.0 970.5L207.0 970.5L207.0 970.0L209.0 970.0L209.0 969.5L211.0 969.5L211.0 969.0L214.0 969.0L214.0 968.5L216.0 968.5L216.0 968.0L218.0 968.0L218.0 967.5L220.0 967.5L220.0 967.0L223.0 967.0L223.0 966.5L225.0 966.5L225.0 966.0L227.0 966.0L227.0 965.5L229.0 965.5L229.0 965.0L232.0 965.0L232.0 964.5L234.0 964.5L234.0 964.0L237.0 964.0L237.0 963.5L240.0 963.5L240.0 963.0L242.0 963.0L242.0 962.5L245.0 962.5L245.0 962.0L247.0 962.0L247.0 961.5L250.0 961.5L250.0 961.0L253.0 961.0L253.0 960.5L255.0 960.5L255.0 960.0L258.0 960.0L258.0 959.5L261.0 959.5L261.0 959.0L263.0 959.0L263.0 958.5L266.0 958.5L266.0 958.0L269.0 958.0L269.0 957.5L273.0 957.5L273.0 957.0L276.0 957.0L276.0 956.5L280.0 956.5L280.0 956.0L283.0 956.0L283.0 955.5L287.0 955.5L287.0 955.0L290.0 955.0L290.0 954.5L293.0 954.5L293.0 954.0L295.0 954.0L295.0 953.5L297.0 953.5L297.0 953.0L299.0 953.0L299.0 952.5L302.0 952.5L302.0 952.0L306.0 952.0L306.0 951.5L309.0 951.5L309.0 951.0L313.0 951.0L313.0 950.5L317.0 950.5L317.0 950.0L320.0 950.0L320.0 949.5L324.0 949.5L324.0 949.0L328.0 949.0L328.0 948.5L331.0 948.5L331.0 948.0L335.0 948.0L335.0 947.5L339.0 947.5L339.0 947.0L343.0 947.0L343.0 946.5L347.0 946.5L347.0 946.0L351.0 946.0L351.0 945.5L356.0 945.5L356.0 945.0L360.0 945.0L360.0 944.5L365.0 944.5L365.0 944.0L369.0 944.0L369.0 943.5L374.0 943.5L374.0 943.0L378.0 943.0L378.0 942.5L383.0 942.5L383.0 942.0L387.0 942.0L387.0 941.5L391.0 941.5L391.0 942.0L392.0 942.0L392.0 942.5L393.0 942.5L393.0 944.5L394.0 944.5L394.0 943.0L395.0 943.0L395.0 941.0L396.0 941.0L396.0 939.5L398.0 939.5L398.0 939.0L400.0 938.5L400.0 938.5L413.0 937.8L413.0 938.0L431.0 938.0L431.0 937.5L442.0 937.5L442.0 937.0L446.0 937.0L446.0 937.2L449.0 936.5L449.0 936.0L453.0 936.0L453.0 935.5L454.0 935.5L454.0 935.0L455.0 935.5L455.0 934.5L456.0 934.5L456.0 934.0L457.0 934.0L457.0 933.5L459.0 933.5L459.0 933.0L462.0 933.0L462.0 931.8L465.0 932.5L465.0 932.5L502.0 933.0L502.0 933.5L503.0 933.5L503.0 934.0L505.0 934.0L505.0 933.5L507.0 934.2L507.0 933.0L508.0 933.0L508.0 931.8L509.0 932.5L509.0 932.0L510.0 932.0L510.0 931.5L526.0 931.5L526.0 931.0L527.0 931.7L527.0 930.5L528.0 931.2L528.0 930.0L529.0 930.0L529.0 929.5L530.0 930.2L530.0 929.0L531.0 929.0L531.0 928.5L535.0 928.0L535.0 929.0L556.0 929.0L556.0 929.5L562.0 930.0L562.0 929.0L565.0 929.0L565.0 928.5L568.0 928.5L568.0 928.0L580.0 928.5L580.0 928.5L581.0 928.5L581.0 928.0L583.0 928.0L583.0 928.0L585.0 926.8L585.0 927.0L588.0 927.0L588.0 926.5L590.0 927.0L590.0 925.3L600.0 925.5L600.0 925.5L609.0 925.5L609.0 925.0L620.0 925.0L620.0 924.5L630.0 924.5L630.0 924.0L641.0 924.0L641.0 923.5L651.0 923.5L651.0 923.0L659.0 923.0L659.0 922.5L666.0 922.5L666.0 922.0L674.0 922.7L674.0 921.5L681.0 921.5L681.0 921.0L689.0 921.0L689.0 920.0L697.0 920.5L697.0 920.0L704.0 920.0L704.0 919.5L709.0 919.5L709.0 919.0L716.0 919.0L716.0 918.5L721.0 919.0L721.0 918.0L728.0 917.5L728.0 917.5L734.0 917.5L734.0 917.0L742.0 917.0L742.0 916.5L749.0 916.5L749.0 916.0L756.0 916.0L756.0 915.5L758.0 915.5L758.0 915.0L760.0 915.0L760.0 914.5L761.0 914.5L761.0 915.0L764.0 915.0L764.0 915.5L766.0 915.5L766.0 915.0L768.0 915.0L768.0 914.5L770.0 914.5L770.0 913.5L775.0 914.0L775.0 913.5L776.0 912.8L776.0 914.0L785.0 914.0L785.0 914.5L786.0 914.5L786.0 914.0L789.0 915.0L789.0 912.8L801.0 913.5L801.0 912.0L803.0 913.0L803.0 912.5L805.0 912.5L805.0 911.0L807.0 912.0L807.0 912.5L808.0 912.2L808.0 911.3L809.0 912.0L809.0 911.5L810.0 912.5L810.0 912.5L811.0 913.0L811.0 913.5L812.0 914.0L812.0 914.0L814.0 914.0L814.0 912.8L815.0 913.5L815.0 913.0L818.0 913.0L818.0 912.5L819.0 913.2L819.0 912.0L821.0 912.5L821.0 911.5L823.0 912.5L823.0 913.0L825.0 913.0L825.0 913.5L828.0 914.5L828.0 913.0L831.0 913.0L831.0 912.5L834.0 913.2L834.0 912.0L837.0 912.0L837.0 912.5L839.0 913.2L839.0 913.0L841.0 913.0L841.0 913.5L843.0 912.5L843.0 913.0L845.0 912.0L845.0 912.5L846.0 912.5L846.0 912.0L847.0 912.0L847.0 910.8L849.0 911.5L849.0 911.0L851.0 910.0L851.0 911.5L853.0 910.8L853.0 912.0L854.0 912.5L854.0 911.8L856.0 912.5L856.0 913.0L858.0 913.0L858.0 913.2L863.0 912.5L863.0 913.0L865.0 913.7L865.0 912.8L867.0 913.5L867.0 914.0L869.0 914.5L869.0 913.5L870.0 914.2L870.0 913.0L871.0 913.7L871.0 913.5L872.0 912.5L872.0 912.0L873.0 912.0L873.0 913.0L874.0 913.0L874.0 914.0L875.0 915.0L875.0 914.8L876.0 915.5L876.0 915.0L877.0 915.0L877.0 924.5L878.0 924.5L878.0 930.0L879.0 930.0L879.0 935.0L880.0 935.0L880.0 942.5L881.0 942.5L881.0 956.0L882.0 956.0L882.0 957.5L883.0 957.5L883.0 958.0L884.0 958.0L884.0 959.0L885.0 959.0L885.0 959.5L886.0 959.5L886.0 960.5L887.0 960.5L887.0 962.0L888.0 962.0L888.0 963.5L889.0 963.5L889.0 964.5L890.0 964.5L890.0 965.5L891.0 965.5L891.0 966.5L892.0 966.5L892.0 967.0L893.0 967.0L893.0 968.0L894.0 968.0L894.0 969.0L895.0 969.0L895.0 970.0L896.0 970.0L896.0 970.5L897.0 970.5L897.0 971.5L898.0 971.5L898.0 972.0L899.0 972.0L899.0 972.5L900.0 972.5L900.0 973.0L901.0 973.0L901.0 973.5L902.0 973.5L902.0 974.0L903.0 974.0L903.0 974.5L905.0 974.5L905.0 975.0L906.0 975.0L906.0 975.5L909.0 975.5L909.0 976.0L912.0 976.0L912.0 976.5L918.0 976.5L918.0 977.0L924.0 977.0L924.0 977.5L932.0 977.5L932.0 978.0L938.0 978.0L938.0 978.5L944.0 978.5L944.0 979.0L950.0 979.0L950.0 979.5L960.0 979.5L960.0 980.0L970.0 980.0L970.0 980.5L1025.0 980.5L1025.0 981.0L1092.0 981.0L1092.0 981.5L1751.0 981.5" stroke="#6c2489" stroke-width="1" fill="none" shape-rendering="crispEdges" />
<path d="M20 58.5h1m69 0h1m34 0h1m34 0h1m34 0h1m69 0h1m34 0h1m34 0h1m34 0h1m69 0h1m34 0h1m34 0h1m34 0h1m69 0h1m34 0h1m34 0h1m34 0h1m69 0h1m34 0h1m34 0h1m33 0h1m69 0h1m34 0h1m34 0h1m34 0h1m69 0h1m34 0h1m34 0h1m34 0h1m69 0h1m34 0h1m34 0h1m34 0h1m69 0h1m34 0h1m34 0h1m34 0h1m69 0h1m34 0h1m34 0h1M20 69.5h1m69 0h1m34 0h1m34 0h1m34 0h1m69 0h1m34 0h1m34 0h1m34 0h1m69 0h1m34 0h1m34 0h1m34 0h1m69 0h1m34 0h1m34 0h1m34 0h1m69 0h1m34 0h1m34 0h1m33 0h1m69 0h1m34 0h1m34 0h1m34 0h1m69 0h1m34 0h1m34 0h1m34 0h1m69 0h1m34 0h1m34 0h1m34 0h1m69 0h1m34 0h1m34 0h1m34 0h1m69 0h1m34 0h1m34 0h1M20 81.5h1m69 0h1m34 0h1m34 0h1m34 0h1m69 0h1m34 0h1m34 0h1m34 0h1m69 0h1m34 0h1m34 0h1m34 0h1m69 0h1m34 0h1m34 0h1m34 0h1m69 0h1m34 0h1m34 0h1m33 0h1m69 0h1m34 0h1m34 0h1m34 0h1m69 0h1m34 0h1m34 0h1m34 0h1m69 0h1m34 0h1m34 0h1m34 0h1m69 0h1m34 0h1m34 0h1m34 0h1m69 0h1m34 0h1m34 0h1M20 92.5h1m69 0h1m34 0h1m34 0h1m34 0h1m69 0h1m34 0h1m34 0h1m34 0h1m69 0h1m34 0h1m34 0h1m34 0h1m69 0h1m34 0h1m34 0h1m34 0h1m69 0h1m34 0h1m34 0h1m33 0h1m69 0h1m34 0h1m34 0h1m34 0h1m69 0h1m34 0h1m34 0h1m34 0h1m69 0h1m34 0h1m34 0h1m34 0h1m69 0h1m34 0h1m34 0h1m34 0h1m69 0h1m34 0h1M20 104.5h1m69 0h1m34 0h1m34 0h1m34 0h1m69 0h1m34 0h1m34 0h1m34 0h1m69 0h1m34 0h1m34 0h1m34 0h1m69 0h1m34 0h1m34 0h1m34 0h1m69 0h1m34 0h1m34 0h1m33 0h1m69 0h1m34 0h1m34 0h1m34 0h1m69 0h1m34 0h1m34 0h1m34 0h1m69 0h1m34 0h1m34 0h1m34 0h1m69 0h1m34 0h1m34 0h1m34 0h1m69 0h1m34 0h1m34 0h1M20 115.5h1m69 0h1m34 0h1m34 0h1m34 0h1m69 0h1m34 0h1m34 0h1m34 0h1m69 0h1m34 0h1m34 0h1m34 0h1m69 0h1m34 0h1m34 0h1m34 0h1m69 0h1m34 0h1m34 0h1m33 0h1m69 0h1m34 0h1m34 0h1m34 0h1m69 0h1m34 0h1m34 0h1m34 0h1m69 0h1m34 0h1m34 0h1m34 0h1m69 0h1m34 0h1m34 0h1m34 0h1m69 0h1m34 0h1M20 127.5h1m69 0h1m34 0h1m34 0h1m34 0h1m69 0h1m34 0h1m34 0h1m34 0h1m69 0h1m34 0h1m34 0h1m34 0h1m69 0h1m34 0h1m34 0h1m34 0h1m69 0h1m34 0h1m34 0h1m33 0h1m69 0h1m34 0h1m34 0h1m34 0h1m69 0h1m34 0h1m34 0h1m34 0h1m69 0h1m34 0h1m34 0h1m34 0h1m69 0h1m34 0h1m34 0h1m34 0h1m69 0h1m34 0h1m34 0h1M20 138.5h1m69 0h1m34 0h1m34 0h1m34 0h1m69 0h1m34 0h1m34 0h1m34 0h1m69 0h1m34 0h1m34 0h1m34 0h1m69 0h1m34 0h1m34 0h1m34 0h1m69 0h1m34 0h1m34 0h1m33 0h1m69 0h1m34 0h1m34 0h1m34 0h1m69 0h1m34 0h1m34 0h1m34 0h1m69 0h1m34 0h1m34 0h1m34 0h1m69 0h1m34 0h1m34 0h1m34 0h1m69 0h1m34 0h1M20 150.5h1m69 0h1m34 0h1m34 0h1m34 0h1m69 0h1m34 0h1m34 0h1m34 0h1m69 0h1m34 0h1m34 0h1m34 0h1m69 0h1m34 0h1m34 0h1m34 0h1m69 0h1m34 0h1m34 0h1m33 0h1m69 0h1m34 0h1m34 0h1m34 0h1m69 0h1m34 0h1m34 0h1m34 0h1m69 0h1m34 0h1m34 0h1m34 0h1m69 0h1m34 0h1m34 0h1m34 0h1m69 0h1m34 0h1m34 0h1M20 177.5h1m69 0h1m34 0h1m34 0h1m34 0h1m69 0h1m34 0h1m34 0h1m34 0h1m69 0h1m34 0h1m34 0h1m34 0h1m69 0h1m34 0h1m34 0h1m34 0h1m69 0h1m34 0h1m34 0h1m33 0h1m69 0h1m34 0h1m34 0h1m34 0h1m69 0h1m34 0h1m34 0h1m34 0h1m69 0h1m34 0h1m34 0h1m34 0h1m69 0h1m34 0h1m34 0h1m34 0h1m69 0h1m34 0h1m34 0h1M20 189.5h1m69 0h1m34 0h1m34 0h1m34 0h1m69 0h1m34 0h1m34 0h1m34 0h1m69 0h1m34 0h1m34 0h1m34 0h1m69 0h1m34 0h1m34 0h1m34 0h1m69 0h1m34 0h1m34 0h1m33 0h1m69 0h1m34 0h1m34 0h1m34 0h1m69 0h1m34 0h1m34 0h1m34 0h1m69 0h1m34 0h1m34 0h1m34 0h1m69 0h1m34 0h1m34 0h1m34 0h1m69 0h1m34 0h1M20 200.5h1m69 0h1m34 0h1m34 0h1m34 0h1m69 0h1m34 0h1m34 0h1m34 0h1m69 0h1m34 0h1m34 0h1m34 0h1m69 0h1m34 0h1m34 0h1m34 0h1m69 0h1m34 0h1m34 0h1m33 0h1m69 0h1m34 0h1m34 0h1m34 0h1m69 0h1m34 0h1m34 0h1m34 0h1m69 0h1m34 0h1m34 0h1m34 0h1m69 0h1m34 0h1m34 0h1m34 0h1m69 0h1m34 0h1m34 0h1M20 212.5h1m69 0h1m34 0h1m34 0h1m34 0h1m69 0h1m34 0h1m34 0h1m34 0h1m69 0h1m34 0h1m34 0h1m34 0h1m69 0h1m34 0h1m34 0h1m34 0h1m69 0h1m34 0h1m34 0h1m33 0h1m69 0h1m34 0h1m34 0h1m34 0h1m69 0h1m34 0h1m34 0h1m34 0h1m69 0h1m34 0h1m34 0h1m34 0h1m69 0h1m34 0h1m34 0h1m34 0h1m69 0h1M20 223.5h1m69 0h1m34 0h1m34 0h1m34 0h1m69 0h1m34 0h1m34 0h1m34 0h1m69 0h1m34 0h1m34 0h1m34 0h1m69 0h1m34 0h1m34 0h1m34 0h1m69 0h1m34 0h1m34 0h1m33 0h1m69 0h1m34 0h1m34 0h1m34 0h1m69 0h1m34 0h1m34 0h1m34 0h1m69 0h1m34 0h1m34 0h1m34 0h1m69 0h1m34 0h1m34 0h1m34 0h1m69 0h1m34 0h1m34 0h1M20 235.5h1m69 0h1m34 0h1m34 0h1m34 0h1m69 0h1m34 0h1m34 0h1m34 0h1m69 0h1m34 0h1m34 0h1m34 0h1m69 0h1m34 0h1m34 0h1m34 0h1m69 0h1m34 0h1m34 0h1m33 0h1m69 0h1m34 0h1m34 0h1m34 0h1m69 0h1m34 0h1m34 0h1m34 0h1m69 0h1m34 0h1m34 0h1m34 0h1m69 0h1m34 0h1m34 0h1m34 0h1m69 0h1M20 258.5h1m69 0h1m34 0h1m34 0h1m34 0h1m69 0h1m34 0h1m34 0h1m34 0h1m69 0h1m34 0h1m34 0h1m34 0h1m69 0h1m34 0h1m34 0h1m34 0h1m69 0h1m34 0h1m34 0h1m33 0h1m69 0h1m34 0h1m34 0h1m34 0h1m69 0h1m34 0h1m34 0h1m34 0h1m69 0h1m34 0h1m34 0h1m34 0h1m69 0h1m34 0h1m34 0h1m34 0h1m69 0h1M20 269.5h1m69 0h1m34 0h1m34 0h1m34 0h1m69 0h1m34 0h1m34 0h1m34 0h1m69 0h1m34 0h1m34 0h1m34 0h1m69 0h1m34 0h1m34 0h1m34 0h1m69 0h1m34 0h1m34 0h1m33 0h1m69 0h1m34 0h1m34 0h1m34 0h1m69 0h1m34 0h1m34 0h1m34 0h1m69 0h1m34 0h1m34 0h1m34 0h1m69 0h1m34 0h1m34 0h1m34 0h1m69 0h1m34 0h1m34 0h1M20 281.5h1m69 0h1m34 0h1m34 0h1m34 0h1m69 0h1m34 0h1m34 0h1m34 0h1m69 0h1m34 0h1m34 0h1m34 0h1m69 0h1m34 0h1m34 0h1m34 0h1m69 0h1m34 0h1m34 0h1m33 0h1m69 0h1m34 0h1m34 0h1m34 0h1m69 0h1m34 0h1m34 0h1m34 0h1m69 0h1m34 0h1m34 0h1m34 0h1m69 0h1m34 0h1m34 0h1m34 0h1m69 0h1M20 292.5h1m69 0h1m34 0h1m34 0h1m34 0h1m69 0h1m34 0h1m34 0h1m34 0h1m69 0h1m34 0h1m34 0h1m34 0h1m69 0h1m34 0h1m34 0h1m34 0h1m69 0h1m34 0h1m34 0h1m33 0h1m69 0h1m34 0h1m34 0h1m34 0h1m69 0h1m34 0h1m34 0h1m34 0h1m69 0h1m34 0h1m34 0h1m34 0h1m69 0h1m34 0h1m34 0h1m34 0h1m69 0h1m34 0h1m34 0h1M20 303.5h1m69 0h1m34 0h1m34 0h1m34 0h1m69 0h1m34 0h1m34 0h1m34 0h1m69 0h1m34 0h1m34 0h1m34 0h1m69 0h1m34 0h1m34 0h1m34 0h1m69 0h1m34 0h1m34 0h1m33 0h1m69 0h1m34 0h1m34 0h1m34 0h1m69 0h1m34 0h1m34 0h1m34 0h1m69 0h1m34 0h1m34 0h1m34 0h1m69 0h1m34 0h1m34 0h1m34 0h1m69 0h1m34 0h1M20 315.5h1m69 0h1m34 0h1m34 0h1m34 0h1m69 0h1m34 0h1m34 0h1m34 0h1m69 0h1m34 0h1m34 0h1m34 0h1m69 0h1m34 0h1m34 0h1m34 0h1m69 0h1m34 0h1m34 0h1m33 0h1m69 0h1m34 0h1m34 0h1m34 0h1m69 0h1m34 0h1m34 0h1m34 0h1m69 0h1m34 0h1m34 0h1m34 0h1m69 0h1m34 0h1m34 0h1m34 0h1m69 0h1m34 0h1m34 0h1M20 326.5h1m69 0h1m34 0h1m34 0h1m34 0h1m69 0h1m34 0h1m34 0h1m34 0h1m69 0h1m34 0h1m34 0h1m34 0h1m69 0h1m34 0h1m34 0h1m34 0h1m69 0h1m34 0h1m34 0h1m33 0h1m69 0h1m34 0h1m34 0h1m34 0h1m69 0h1m34 0h1m34 0h1m34 0h1m69 0h1m34 0h1m34 0h1m34 0h1m69 0h1m34 0h1m34 0h1m34 0h1m69 0h1M20 338.5h1m69 0h1m34 0h1m34 0h1m34 0h1m69 0h1m34 0h1m34 0h1m34 0h1m69 0h1m34 0h1m34 0h1m34 0h1m69 0h1m34 0h1m34 0h1m34 0h1m69 0h1m34 0h1m34 0h1m33 0h1m69 0h1m34 0h1m34 0h1m34 0h1m69 0h1m34 0h1m34 0h1m34 0h1m69 0h1m34 0h1m34 0h1m34 0h1m69 0h1m34 0h1m34 0h1m34 0h1m69 0h1m34 0h1m34 0h1M20 361.5h1m69 0h1m34 0h1m34 0h1m34 0h1m69 0h1m34 0h1m34 0h1m34 0h1m69 0h1m34 0h1m34 0h1m34 0h1m69 0h1m34 0h1m34 0h1m34 0h1m69 0h1m34 0h1m34 0h1m33 0h1m69 0h1m34 0h1m34 0h1m34 0h1m69 0h1m34 0h1m34 0h1m34 0h1m69 0h1m34 0h1m34 0h1m34 0h1m69 0h1m34 0h1m34 0h1m34 0h1m69 0h1m34 0h1m34 0h1M20 372.5h1m69 0h1m34 0h1m34 0h1m34 0h1m69 0h1m34 0h1m34 0h1m34 0h1m69 0h1m34 0h1m34 0h1m34 0h1m69 0h1m34 0h1m34 0h1m34 0h1m69 0h1m34 0h1m34 0h1m33 0h1m69 0h1m34 0h1m34 0h1m34 0h1m69 0h1m34 0h1m34 0h1m34 0h1m69 0h1m34 0h1m34 0h1m34 0h1m69 0h1m34 0h1m34 0h1m34 0h1m69 0h1M20 384.5h1m69 0h1m34 0h1m34 0h1m34 0h1m69 0h1m34 0h1m34 0h1m34 0h1m69 0h1m34 0h1m34 0h1m34 0h1m69 0h1m34 0h1m34 0h1m34 0h1m69 0h1m34 0h1m34 0h1m33 0h1m69 0h1m34 0h1m34 0h1m34 0h1m69 0h1m34 0h1m34 0h1m34 0h1m69 0h1m34 0h1m34 0h1m34 0h1m69 0h1m34 0h1m34 0h1m34 0h1m69 0h1m34 0h1m34 0h1M20 395.5h1m69 0h1m34 0h1m34 0h1m34 0h1m69 0h1m34 0h1m34 0h1m34 0h1m69 0h1m34 0h1m34 0h1m34 0h1m69 0h1m34 0h1m34 0h1m34 0h1m69 0h1m34 0h1m34 0h1m33 0h1m69 0h1m34 0h1m34 0h1m34 0h1m69 0h1m34 0h1m34 0h1m34 0h1m69 0h1m34 0h1m34 0h1m34 0h1m69 0h1m34 0h1m34 0h1m34 0h1m69 0h1m34 0h1M20 409.5h1m69 0h1m34 0h1m34 0h1m34 0h1m69 0h1m34 0h1m34 0h1m34 0h1m69 0h1m34 0h1m34 0h1m34 0h1m69 0h1m34 0h1m34 0h1m34 0h1m69 0h1m34 0h1m34 0h1m33 0h1m69 0h1m34 0h1m34 0h1m34 0h1m69 0h1m34 0h1m34 0h1m34 0h1m69 0h1m34 0h1m34 0h1m34 0h1m69 0h1m34 0h1m34 0h1m34 0h1m69 0h1m34 0h1m34 0h1M20 420.5h1m69 0h1m34 0h1m34 0h1m34 0h1m69 0h1m34 0h1m34 0h1m34 0h1m69 0h1m34 0h1m34 0h1m34 0h1m69 0h1m34 0h1m34 0h1m34 0h1m69 0h1m34 0h1m34 0h1m33 0h1m69 0h1m34 0h1m34 0h1m34 0h1m69 0h1m34 0h1m34 0h1m34 0h1m69 0h1m34 0h1m34 0h1m34 0h1m69 0h1m34 0h1m34 0h1m34 0h1m69 0h1m34 0h1M20 432.5h1m69 0h1m34 0h1m34 0h1m34 0h1m69 0h1m34 0h1m34 0h1m34 0h1m69 0h1m34 0h1m34 0h1m34 0h1m69 0h1m34 0h1m34 0h1m34 0h1m69 0h1m34 0h1m34 0h1m33 0h1m69 0h1m34 0h1m34 0h1m34 0h1m69 0h1m34 0h1m34 0h1m34 0h1m69 0h1m34 0h1m34 0h1m34 0h1m69 0h1m34 0h1m34 0h1m34 0h1m69 0h1m34 0h1m34 0h1M20 443.5h1m69 0h1m34 0h1m34 0h1m34 0h1m69 0h1m34 0h1m34 0h1m34 0h1m69 0h1m34 0h1m34 0h1m34 0h1m69 0h1m34 0h1m34 0h1m34 0h1m69 0h1m34 0h1m34 0h1m33 0h1m69 0h1m34 0h1m34 0h1m34 0h1m69 0h1m34 0h1m34 0h1m34 0h1m69 0h1m34 0h1m34 0h1m34 0h1m69 0h1m34 0h1m34 0h1m34 0h1m69 0h1M20 455.5h1m69 0h1m34 0h1m34 0h1m34 0h1m69 0h1m34 0h1m34 0h1m34 0h1m69 0h1m34 0h1m34 0h1m34 0h1m69 0h1m34 0h1m34 0h1m34 0h1m69 0h1m34 0h1m34 0h1m33 0h1m69 0h1m34 0h1m34 0h1m34 0h1m69 0h1m34 0h1m34 0h1m34 0h1m69 0h1m34 0h1m34 0h1m34 0h1m69 0h1m34 0h1m34 0h1m34 0h1m69 0h1m34 0h1m34 0h1M20 466.5h1m69 0h1m34 0h1m34 0h1m34 0h1m69 0h1m34 0h1m34 0h1m34 0h1m69 0h1m34 0h1m34 0h1m34 0h1m69 0h1m34 0h1m34 0h1m34 0h1m69 0h1m34 0h1m34 0h1m33 0h1m69 0h1m34 0h1m34 0h1m34 0h1m69 0h1m34 0h1m34 0h1m34 0h1m69 0h1m34 0h1m34 0h1m34 0h1m69 0h1m34 0h1m34 0h1m34 0h1m69 0h1M20 489.5h1m69 0h1m34 0h1m34 0h1m34 0h1m69 0h1m34 0h1m34 0h1m34 0h1m69 0h1m34 0h1m34 0h1m34 0h1m69 0h1m34 0h1m34 0h1m34 0h1m69 0h1m34 0h1m34 0h1m33 0h1m69 0h1m34 0h1m34 0h1m34 0h1m69 0h1m34 0h1m34 0h1m34 0h1m69 0h1m34 0h1m34 0h1m34 0h1m69 0h1m34 0h1m34 0h1m34 0h1m69 0h1M20 501.5h1m69 0h1m34 0h1m34 0h1m34 0h1m69 0h1m34 0h1m34 0h1m34 0h1m69 0h1m34 0h1m34 0h1m34 0h1m69 0h1m34 0h1m34 0h1m34 0h1m69 0h1m34 0h1m34 0h1m33 0h1m69 0h1m34 0h1m34 0h1m34 0h1m69 0h1m34 0h1m34 0h1m34 0h1m69 0h1m34 0h1m34 0h1m34 0h1m69 0h1m34 0h1m34 0h1m34 0h1m69 0h1m34 0h1m34 0h1M20 512.5h1m69 0h1m34 0h1m34 0h1m34 0h1m69 0h1m34 0h1m34 0h1m34 0h1m69 0h1m34 0h1m34 0h1m34 0h1m69 0h1m34 0h1m34 0h1m34 0h1m69 0h1m34 0h1m34 0h1m33 0h1m69 0h1m34 0h1m34 0h1m34 0h1m69 0h1m34 0h1m34 0h1m34 0h1m69 0h1m34 0h1m34 0h1m34 0h1m69 0h1m34 0h1m34 0h1m34 0h1m69 0h1M20 526.5h1m69 0h1m34 0h1m34 0h1m34 0h1m69 0h1m34 0h1m34 0h1m34 0h1m69 0h1m34 0h1m34 0h1m34 0h1m69 0h1m34 0h1m34 0h1m34 0h1m69 0h1m34 0h1m34 0h1m33 0h1m69 0h1m34 0h1m34 0h1m34 0h1m69 0h1m34 0h1m34 0h1m34 0h1m69 0h1m34 0h1m34 0h1m34 0h1m69 0h1m34 0h1m34 0h1m34 0h1m69 0h1m34 0h1m34 0h1M20 537.5h1m69 0h1m34 0h1m34 0h1m34 0h1m69 0h1m34 0h1m34 0h1m34 0h1m69 0h1m34 0h1m34 0h1m34 0h1m69 0h1m34 0h1m34 0h1m34 0h1m69 0h1m34 0h1m34 0h1m33 0h1m69 0h1m34 0h1m34 0h1m34 0h1m69 0h1m34 0h1m34 0h1m34 0h1m69 0h1m34 0h1m34 0h1m34 0h1m69 0h1m34 0h1m34 0h1m34 0h1m69 0h1m34 0h1M20 549.5h1m69 0h1m34 0h1m34 0h1m34 0h1m69 0h1m34 0h1m34 0h1m34 0h1m69 0h1m34 0h1m34 0h1m34 0h1m69 0h1m34 0h1m34 0h1m34 0h1m69 0h1m34 0h1m34 0h1m33 0h1m69 0h1m34 0h1m34 0h1m34 0h1m69 0h1m34 0h1m34 0h1m34 0h1m69 0h1m34 0h1m34 0h1m34 0h1m69 0h1m34 0h1m34 0h1m34 0h1m69 0h1m34 0h1m34 0h1M20 560.5h1m69 0h1m34 0h1m34 0h1m34 0h1m69 0h1m34 0h1m34 0h1m34 0h1m69 0h1m34 0h1m34 0h1m34 0h1m69 0h1m34 0h1m34 0h1m34 0h1m69 0h1m34 0h1m34 0h1m33 0h1m69 0h1m34 0h1m34 0h1m34 0h1m69 0h1m34 0h1m34 0h1m34 0h1m69 0h1m34 0h1m34 0h1m34 0h1m69 0h1m34 0h1m34 0h1m34 0h1m69 0h1m34 0h1M20 572.5h1m69 0h1m34 0h1m34 0h1m34 0h1m69 0h1m34 0h1m34 0h1m34 0h1m69 0h1m34 0h1m34 0h1m34 0h1m69 0h1m34 0h1m34 0h1m34 0h1m69 0h1m34 0h1m34 0h1m33 0h1m69 0h1m34 0h1m34 0h1m34 0h1m69 0h1m34 0h1m34 0h1m34 0h1m69 0h1m34 0h1m34 0h1m34 0h1m69 0h1m34 0h1m34 0h1m34 0h1m69 0h1m34 0h1m34 0h1M20 595.5h1m69 0h1m34 0h1m34 0h1m34 0h1m69 0h1m34 0h1m34 0h1m34 0h1m69 0h1m34 0h1m34 0h1m34 0h1m69 0h1m34 0h1m34 0h1m34 0h1m69 0h1m34 0h1m34 0h1m33 0h1m69 0h1m34 0h1m34 0h1m34 0h1m69 0h1m34 0h1m34 0h1m34 0h1m69 0h1m34 0h1m34 0h1m34 0h1m69 0h1m34 0h1m34 0h1m34 0h1m69 0h1m34 0h1m34 0h1M20 606.5h1m69 0h1m34 0h1m34 0h1m34 0h1m69 0h1m34 0h1m34 0h1m34 0h1m69 0h1m34 0h1m34 0h1m34 0h1m69 0h1m34 0h1m34 0h1m34 0h1m69 0h1m34 0h1m34 0h1m33 0h1m69 0h1m34 0h1m34 0h1m34 0h1m69 0h1m34 0h1m34 0h1m34 0h1m69 0h1m34 0h1m34 0h1m34 0h1m69 0h1m34 0h1m34 0h1m34 0h1m69 0h1m34 0h1M20 618.5h1m69 0h1m34 0h1m34 0h1m34 0h1m69 0h1m34 0h1m34 0h1m34 0h1m69 0h1m34 0h1m34 0h1m34 0h1m69 0h1m34 0h1m34 0h1m34 0h1m69 0h1m34 0h1m34 0h1m33 0h1m69 0h1m34 0h1m34 0h1m34 0h1m69 0h1m34 0h1m34 0h1m34 0h1m69 0h1m34 0h1m34 0h1m34 0h1m69 0h1m34 0h1m34 0h1m34 0h1m69 0h1m34 0h1m34 0h1M20 629.5h1m69 0h1m34 0h1m34 0h1m34 0h1m69 0h1m34 0h1m34 0h1m34 0h1m69 0h1m34 0h1m34 0h1m34 0h1m69 0h1m34 0h1m34 0h1m34 0h1m69 0h1m34 0h1m34 0h1m33 0h1m69 0h1m34 0h1m34 0h1m34 0h1m69 0h1m34 0h1m34 0h1m34 0h1m69 0h1m34 0h1m34 0h1m34 0h1m69 0h1m34 0h1m34 0h1m34 0h1m69 0h1m34 0h1M20 643.5h1m69 0h1m34 0h1m34 0h1m34 0h1m69 0h1m34 0h1m34 0h1m34 0h1m69 0h1m34 0h1m34 0h1m34 0h1m69 0h1m34 0h1m34 0h1m34 0h1m69 0h1m34 0h1m34 0h1m33 0h1m69 0h1m34 0h1m34 0h1m34 0h1m69 0h1m34 0h1m34 0h1m34 0h1m69 0h1m34 0h1m34 0h1m34 0h1m69 0h1m34 0h1m34 0h1m34 0h1m69 0h1m34 0h1m34 0h1M20 654.5h1m69 0h1m34 0h1m34 0h1m34 0h1m69 0h1m34 0h1m34 0h1m34 0h1m69 0h1m34 0h1m34 0h1m34 0h1m69 0h1m34 0h1m34 0h1m34 0h1m69 0h1m34 0h1m34 0h1m33 0h1m69 0h1m34 0h1m34 0h1m34 0h1m69 0h1m34 0h1m34 0h1m34 0h1m69 0h1m34 0h1m34 0h1m34 0h1m69 0h1m34 0h1m34 0h1m34 0h1m69 0h1m34 0h1M20 666.5h1m69 0h1m34 0h1m34 0h1m34 0h1m69 0h1m34 0h1m34 0h1m34 0h1m69 0h1m34 0h1m34 0h1m34 0h1m69 0h1m34 0h1m34 0h1m34 0h1m69 0h1m34 0h1m34 0h1m33 0h1m69 0h1m34 0h1m34 0h1m34 0h1m69 0h1m34 0h1m34 0h1m34 0h1m69 0h1m34 0h1m34 0h1m34 0h1m69 0h1m34 0h1m34 0h1m34 0h1m69 0h1m34 0h1m34 0h1M20 677.5h1m69 0h1m34 0h1m34 0h1m34 0h1m69 0h1m34 0h1m34 0h1m34 0h1m69 0h1m34 0h1m34 0h1m34 0h1m69 0h1m34 0h1m34 0h1m34 0h1m69 0h1m34 0h1m34 0h1m33 0h1m69 0h1m34 0h1m34 0h1m34 0h1m69 0h1m34 0h1m34 0h1m34 0h1m69 0h1m34 0h1m34 0h1m34 0h1m69 0h1m34 0h1m34 0h1m34 0h1m69 0h1m34 0h1M20 689.5h1m69 0h1m34 0h1m34 0h1m34 0h1m69 0h1m34 0h1m34 0h1m34 0h1m69 0h1m34 0h1m34 0h1m34 0h1m69 0h1m34 0h1m34 0h1m34 0h1m69 0h1m34 0h1m34 0h1m33 0h1m69 0h1m34 0h1m34 0h1m34 0h1m69 0h1m34 0h1m34 0h1m34 0h1m69 0h1m34 0h1m34 0h1m34 0h1m69 0h1m34 0h1m34 0h1m34 0h1m69 0h1m34 0h1m34 0h1M20 700.5h1m69 0h1m34 0h1m34 0h1m34 0h1m69 0h1m34 0h1m34 0h1m34 0h1m69 0h1m34 0h1m34 0h1m34 0h1m69 0h1m34 0h1m34 0h1m34 0h1m69 0h1m34 0h1m34 0h1m33 0h1m69 0h1m34 0h1m34 0h1m34 0h1m69 0h1m34 0h1m34 0h1m34 0h1m69 0h1m34 0h1m34 0h1m34 0h1m69 0h1m34 0h1m34 0h1m34 0h1m69 0h1m34 0h1M20 712.5h1m69 0h1m34 0h1m34 0h1m34 0h1m69 0h1m34 0h1m34 0h1m34 0h1m69 0h1m34 0h1m34 0h1m34 0h1m69 0h1m34 0h1m34 0h1m34 0h1m69 0h1m34 0h1m34 0h1m33 0h1m69 0h1m34 0h1m34 0h1m34 0h1m69 0h1m34 0h1m34 0h1m34 0h1m69 0h1m34 0h1m34 0h1m34 0h1m69 0h1m34 0h1m34 0h1m34 0h1m69 0h1m34 0h1m34 0h1M20 723.5h1m69 0h1m34 0h1m34 0h1m34 0h1m69 0h1m34 0h1m34 0h1m34 0h1m69 0h1m34 0h1m34 0h1m34 0h1m69 0h1m34 0h1m34 0h1m34 0h1m69 0h1m34 0h1m34 0h1m33 0h1m69 0h1m34 0h1m34 0h1m34 0h1m69 0h1m34 0h1m34 0h1m34 0h1m69 0h1m34 0h1m34 0h1m34 0h1m69 0h1m34 0h1m34 0h1m34 0h1m69 0h1m34 0h1M20 735.5h1m69 0h1m34 0h1m34 0h1m34 0h1m69 0h1m34 0h1m34 0h1m34 0h1m69 0h1m34 0h1m34 0h1m34 0h1m69 0h1m34 0h1m34 0h1m34 0h1m69 0h1m34 0h1m34 0h1m33 0h1m69 0h1m34 0h1m34 0h1m34 0h1m69 0h1m34 0h1m34 0h1m34 0h1m69 0h1m34 0h1m34 0h1m34 0h1m69 0h1m34 0h1m34 0h1m34 0h1m69 0h1m34 0h1m34 0h1M20 760.5h1m69 0h1m34 0h1m34 0h1m34 0h1m69 0h1m34 0h1m34 0h1m34 0h1m69 0h1m34 0h1m34 0h1m34 0h1m69 0h1m34 0h1m34 0h1m34 0h1m69 0h1m34 0h1m34 0h1m33 0h1m69 0h1m34 0h1m34 0h1m34 0h1m69 0h1m34 0h1m34 0h1m34 0h1m69 0h1m34 0h1m34 0h1m34 0h1m69 0h1m34 0h1m34 0h1m34 0h1m69 0h1m34 0h1m34 0h1M20 771.5h1m69 0h1m34 0h1m34 0h1m34 0h1m69 0h1m34 0h1m34 0h1m34 0h1m69 0h1m34 0h1m34 0h1m34 0h1m69 0h1m34 0h1m34 0h1m34 0h1m69 0h1m34 0h1m34 0h1m33 0h1m69 0h1m34 0h1m34 0h1m34 0h1m69 0h1m34 0h1m34 0h1m34 0h1m69 0h1m34 0h1m34 0h1m34 0h1m69 0h1m34 0h1m34 0h1m34 0h1m69 0h1M20 783.5h1m69 0h1m34 0h1m34 0h1m34 0h1m69 0h1m34 0h1m34 0h1m34 0h1m69 0h1m34 0h1m34 0h1m34 0h1m69 0h1m34 0h1m34 0h1m34 0h1m69 0h1m34 0h1m34 0h1m33 0h1m69 0h1m34 0h1m34 0h1m34 0h1m69 0h1m34 0h1m34 0h1m34 0h1m69 0h1m34 0h1m34 0h1m34 0h1m69 0h1m34 0h1m34 0h1m34 0h1m69 0h1m34 0h1m34 0h1M20 794.5h1m69 0h1m34 0h1m34 0h1m34 0h1m69 0h1m34 0h1m34 0h1m34 0h1m69 0h1m34 0h1m34 0h1m34 0h1m69 0h1m34 0h1m34 0h1m34 0h1m69 0h1m34 0h1m34 0h1m33 0h1m69 0h1m34 0h1m34 0h1m34 0h1m69 0h1m34 0h1m34 0h1m34 0h1m69 0h1m34 0h1m34 0h1m34 0h1m69 0h1m34 0h1m34 0h1m34 0h1m69 0h1M20 806.5h1m69 0h1m34 0h1m34 0h1m34 0h1m69 0h1m34 0h1m34 0h1m34 0h1m69 0h1m34 0h1m34 0h1m34 0h1m69 0h1m34 0h1m34 0h1m34 0h1m69 0h1m34 0h1m34 0h1m33 0h1m69 0h1m34 0h1m34 0h1m34 0h1m69 0h1m34 0h1m34 0h1m34 0h1m69 0h1m34 0h1m34 0h1m34 0h1m69 0h1m34 0h1m34 0h1m34 0h1m69 0h1m34 0h1m34 0h1M20 817.5h1m69 0h1m34 0h1m34 0h1m34 0h1m69 0h1m34 0h1m34 0h1m34 0h1m69 0h1m34 0h1m34 0h1m34 0h1m69 0h1m34 0h1m34 0h1m34 0h1m69 0h1m34 0h1m34 0h1m33 0h1m69 0h1m34 0h1m34 0h1m34 0h1m69 0h1m34 0h1m34 0h1m34 0h1m69 0h1m34 0h1m34 0h1m34 0h1m69 0h1m34 0h1m34 0h1m34 0h1m69 0h1M20 829.5h1m69 0h1m34 0h1m34 0h1m34 0h1m69 0h1m34 0h1m34 0h1m34 0h1m69 0h1m34 0h1m34 0h1m34 0h1m69 0h1m34 0h1m34 0h1m34 0h1m69 0h1m34 0h1m34 0h1m33 0h1m69 0h1m34 0h1m34 0h1m34 0h1m69 0h1m34 0h1m34 0h1m34 0h1m69 0h1m34 0h1m34 0h1m34 0h1m69 0h1m34 0h1m34 0h1m34 0h1m69 0h1m34 0h1m34 0h1M20 840.5h1m69 0h1m34 0h1m34 0h1m34 0h1m69 0h1m34 0h1m34 0h1m34 0h1m69 0h1m34 0h1m34 0h1m34 0h1m69 0h1m34 0h1m34 0h1m34 0h1m69 0h1m34 0h1m34 0h1m33 0h1m69 0h1m34 0h1m34 0h1m34 0h1m69 0h1m34 0h1m34 0h1m34 0h1m69 0h1m34 0h1m34 0h1m34 0h1m69 0h1m34 0h1m34 0h1m34 0h1m69 0h1M20 852.5h1m69 0h1m34 0h1m34 0h1m34 0h1m69 0h1m34 0h1m34 0h1m34 0h1m69 0h1m34 0h1m34 0h1m34 0h1m69 0h1m34 0h1m34 0h1m34 0h1m69 0h1m34 0h1m34 0h1m33 0h1m69 0h1m34 0h1m34 0h1m34 0h1m69 0h1m34 0h1m34 0h1m34 0h1m69 0h1m34 0h1m34 0h1m34 0h1m69 0h1m34 0h1m34 0h1m34 0h1m69 0h1m34 0h1m34 0h1M20 880.5h1m69 0h1m34 0h1m34 0h1m34 0h1m69 0h1m34 0h1m34 0h1m34 0h1m69 0h1m34 0h1m34 0h1m34 0h1m69 0h1m34 0h1m34 0h1m34 0h1m69 0h1m34 0h1m34 0h1m33 0h1m69 0h1m34 0h1m34 0h1m34 0h1m69 0h1m34 0h1m34 0h1m34 0h1m69 0h1m34 0h1m34 0h1m34 0h1m69 0h1m34 0h1m34 0h1m34 0h1m69 0h1m34 0h1m34 0h1M20 891.5h1m69 0h1m34 0h1m34 0h1m34 0h1m69 0h1m34 0h1m34 0h1m34 0h1m69 0h1m34 0h1m34 0h1m34 0h1m69 0h1m34 0h1m34 0h1m34 0h1m69 0h1m34 0h1m34 0h1m33 0h1m69 0h1m34 0h1m34 0h1m34 0h1m69 0h1m34 0h1m34 0h1m34 0h1m69 0h1m34 0h1m34 0h1m34 0h1m69 0h1m34 0h1m34 0h1m34 0h1m69 0h1M20 903.5h1m69 0h1m34 0h1m34 0h1m34 0h1m69 0h1m34 0h1m34 0h1m34 0h1m69 0h1m34 0h1m34 0h1m34 0h1m69 0h1m34 0h1m34 0h1m34 0h1m69 0h1m34 0h1m34 0h1m33 0h1m69 0h1m34 0h1m34 0h1m34 0h1m69 0h1m34 0h1m34 0h1m34 0h1m69 0h1m34 0h1m34 0h1m34 0h1m69 0h1m34 0h1m34 0h1m34 0h1m69 0h1m34 0h1m34 0h1M20 914.5h1m69 0h1m34 0h1m34 0h1m34 0h1m69 0h1m34 0h1m34 0h1m34 0h1m69 0h1m34 0h1m34 0h1m34 0h1m69 0h1m34 0h1m34 0h1m34 0h1m69 0h1m34 0h1m34 0h1m33 0h1m69 0h1m34 0h1m34 0h1m34 0h1m69 0h1m34 0h1m34 0h1m34 0h1m69 0h1m34 0h1m34 0h1m34 0h1m69 0h1m34 0h1m34 0h1m34 0h1m69 0h1M20 926.5h1m69 0h1m34 0h1m34 0h1m34 0h1m69 0h1m34 0h1m34 0h1m34 0h1m69 0h1m34 0h1m34 0h1m34 0h1m69 0h1m34 0h1m34 0h1m34 0h1m69 0h1m34 0h1m34 0h1m33 0h1m69 0h1m34 0h1m34 0h1m34 0h1m69 0h1m34 0h1m34 0h1m34 0h1m69 0h1m34 0h1m34 0h1m34 0h1m69 0h1m34 0h1m34 0h1m34 0h1m69 0h1m34 0h1m34 0h1M20 937.5h1m69 0h1m34 0h1m34 0h1m34 0h1m69 0h1m34 0h1m34 0h1m34 0h1m69 0h1m34 0h1m34 0h1m34 0h1m69 0h1m34 0h1m34 0h1m34 0h1m69 0h1m34 0h1m34 0h1m33 0h1m69 0h1m34 0h1m34 0h1m34 0h1m69 0h1m34 0h1m34 0h1m34 0h1m69 0h1m34 0h1m34 0h1m34 0h1m69 0h1m34 0h1m34 0h1m34 0h1m69 0h1M20 949.5h1m69 0h1m34 0h1m34 0h1m34 0h1m69 0h1m34 0h1m34 0h1m34 0h1m69 0h1m34 0h1m34 0h1m34 0h1m69 0h1m34 0h1m34 0h1m34 0h1m69 0h1m34 0h1m34 0h1m33 0h1m69 0h1m34 0h1m34 0h1m34 0h1m69 0h1m34 0h1m34 0h1m34 0h1m69 0h1m34 0h1m34 0h1m34 0h1m69 0h1m34 0h1m34 0h1m34 0h1m69 0h1m34 0h1m34 0h1M20 960.5h1m69 0h1m34 0h1m34 0h1m34 0h1m69 0h1m34 0h1m34 0h1m34 0h1m69 0h1m34 0h1m34 0h1m34 0h1m69 0h1m34 0h1m34 0h1m34 0h1m69 0h1m34 0h1m34 0h1m33 0h1m69 0h1m34 0h1m34 0h1m34 0h1m69 0h1m34 0h1m34 0h1m34 0h1m69 0h1m34 0h1m34 0h1m34 0h1m69 0h1m34 0h1m34 0h1m34 0h1m69 0h1M20 983.5h1m69 0h1m34 0h1m34 0h1m34 0h1m69 0h1m34 0h1m34 0h1m34 0h1m69 0h1m34 0h1m34 0h1m34 0h1m69 0h1m34 0h1m34 0h1m34 0h1m69 0h1m34 0h1m34 0h1m33 0h1m69 0h1m34 0h1m34 0h1m34 0h1m69 0h1m34 0h1m34 0h1m34 0h1m69 0h1m34 0h1m34 0h1m34 0h1m69 0h1m34 0h1m34 0h1m34 0h1m69 0h1" stroke="#5a5a5a" stroke-width="1" fill="none" shape-rendering="crispEdges"/>
<path d="M230.5 58v1m0 1v1m0 2v1m0 1v1m0 1v1m0 1v1m0 2v1m0 1v1m0 1v1m0 2v1m0 1v1m0 1v1m0 2v1m0 1v1m0 1v1m0 1v1m0 2v1m0 1v1m0 1v1m0 2v1m0 1v1m0 1v1m0 2v1m0 1v1m0 1v1m0 1v1m0 2v1m0 1v1m0 1v1m0 2v1m0 1v1m0 1v1m0 2v1m0 1v1m0 1v1m0 1v1m0 2v1m0 1v1m0 1v1m0 2v1m0 1v1m0 1v1m0 2v1m0 1v1m0 1v1m0 4v1m0 1v1m0 1v1m0 2v1M230.5 175v1m0 1v1m0 2v1m0 1v1m0 1v1m0 2v1m0 1v1m0 1v1m0 2v1m0 1v1m0 1v1m0 1v1m0 2v1m0 1v1m0 1v1m0 2v1m0 1v1m0 1v1m0 2v1m0 1v1m0 1v1m0 1v1m0 2v1m0 1v1m0 1v1m0 2v1m0 1v1m0 1v1m0 2v1m0 1v1m0 1v1m0 4v1m0 1v1m0 1v1m0 2v1m0 1v1m0 1v1m0 2v1m0 1v1m0 1v1m0 1v1m0 2v1m0 1v1m0 1v1m0 2v1m0 1v1m0 1v1m0 2v1m0 1v1M230.5 292v1m0 1v1m0 2v1m0 1v1m0 1v1m0 1v1m0 2v1m0 1v1m0 1v1m0 2v1m0 1v1m0 1v1m0 2v1m0 1v1m0 1v1m0 1v1m0 2v1m0 1v1m0 1v1m0 2v1m0 1v1m0 1v1m0 2v1m0 1v1m0 1v1m0 4v1m0 1v1m0 1v1m0 2v1m0 1v1m0 1v1m0 2v1m0 1v1m0 1v1m0 1v1m0 2v1m0 1v1m0 1v1m0 2v1m0 1v1m0 1v1m0 2v1m0 1v1m0 1v1m0 1v1m0 2v1m0 1v1m0 1v1m0 2v1M230.5 409v1m0 1v1m0 2v1m0 1v1m0 1v1m0 1v1m0 2v1m0 1v1m0 1v1m0 2v1m0 1v1m0 1v1m0 2v1m0 1v1m0 1v1m0 1v1m0 2v1m0 1v1m0 1v1m0 2v1m0 1v1m0 1v1m0 2v1m0 1v1m0 1v1m0 1v1m0 2v1m0 1v1m0 1v1m0 2v1m0 3v1m0 2v1m0 1v1m0 1v1m0 1v1m0 2v1m0 1v1m0 1v1m0 2v1m0 1v1m0 1v1m0 2v1m0 1v1m0 1v1m0 1v1m0 2v1m0 1v1m0 1v1m0 2v1M230.5 526v1m0 1v1m0 2v1m0 1v1m0 1v1m0 1v1m0 2v1m0 1v1m0 1v1m0 2v1m0 1v1m0 1v1m0 2v1m0 1v1m0 1v1m0 1v1m0 2v1m0 1v1m0 1v1m0 2v1m0 1v1m0 1v1m0 2v1m0 1v1m0 1v1m0 4v1m0 1v1m0 1v1m0 2v1m0 1v1m0 1v1m0 2v1m0 1v1m0 1v1m0 1v1m0 2v1m0 1v1m0 1v1m0 2v1m0 1v1m0 1v1m0 2v1m0 1v1m0 1v1m0 1v1m0 2v1m0 1v1m0 1v1m0 2v1M230.5 643v1m0 1v1m0 2v1m0 1v1m0 1v1m0 1v1m0 2v1m0 1v1m0 1v1m0 2v1m0 1v1m0 1v1m0 2v1m0 1v1m0 1v1m0 1v1m0 2v1m0 1v1m0 1v1m0 2v1m0 1v1m0 1v1m0 2v1m0 1v1m0 1v1m0 1v1m0 2v1m0 1v1m0 1v1m0 2v1m0 1v1m0 1v1m0 2v1m0 1v1m0 1v1m0 1v1m0 2v1m0 1v1m0 1v1m0 2v1m0 1v1m0 1v1m0 2v1m0 1v1M230.5 760v1m0 1v1m0 2v1m0 1v1m0 1v1m0 1v1m0 2v1m0 1v1m0 1v1m0 2v1m0 1v1m0 1v1m0 2v1m0 1v1m0 1v1m0 1v1m0 2v1m0 1v1m0 1v1m0 2v1m0 1v1m0 1v1m0 2v1m0 1v1m0 1v1m0 1v1m0 2v1m0 1v1m0 1v1m0 2v1m0 1v1m0 1v1m0 2v1m0 1v1m0 1v1m0 1v1m0 2v1m0 1v1m0 1v1m0 2v1m0 1v1m0 1v1m0 2v1m0 1v1m0 1v1m0 4v1m0 1v1m0 1v1m0 2v1M230.5 878v1m0 1v1m0 1v1m0 2v1m0 1v1m0 1v1m0 2v1m0 1v1m0 1v1m0 2v1m0 1v1m0 1v1m0 1v1m0 2v1m0 1v1m0 1v1m0 2v1m0 1v1m0 1v1m0 2v1m0 1v1m0 1v1m0 1v1m0 2v1m0 1v1m0 1v1m0 2v1m0 1v1m0 1v1m0 2v1m0 1v1m0 1v1m0 1v1m0 2v1m0 1v1m0 1v1m0 2v1m0 1v1m0 1v1m0 2v1m0 1v1m0 3v1m0 2v1m0 1v1m0 1v1m0 2v1m0 1v1m0 1v1m0 2v1M405.5 58v1m0 1v1m0 2v1m0 1v1m0 1v1m0 1v1m0 2v1m0 1v1m0 1v1m0 2v1m0 1v1m0 1v1m0 2v1m0 1v1m0 1v1m0 1v1m0 2v1m0 1v1m0 1v1m0 2v1m0 1v1m0 1v1m0 2v1m0 1v1m0 1v1m0 1v1m0 2v1m0 1v1m0 1v1m0 2v1m0 1v1m0 1v1m0 2v1m0 1v1m0 1v1m0 1v1m0 2v1m0 1v1m0 1v1m0 2v1m0 1v1m0 1v1m0 2v1m0 1v1m0 1v1m0 4v1m0 1v1m0 1v1m0 2v1M405.5 175v1m0 1v1m0 2v1m0 1v1m0 1v1m0 2v1m0 1v1m0 1v1m0 2v1m0 1v1m0 1v1m0 1v1m0 2v1m0 1v1m0 1v1m0 2v1m0 1v1m0 1v1m0 2v1m0 1v1m0 1v1m0 1v1m0 2v1m0 1v1m0 1v1m0 2v1m0 1v1m0 1v1m0 2v1m0 1v1m0 1v1m0 4v1m0 1v1m0 1v1m0 2v1m0 1v1m0 1v1m0 2v1m0 1v1m0 1v1m0 1v1m0 2v1m0 1v1m0 1v1m0 2v1m0 1v1m0 1v1m0 2v1m0 1v1M405.5 292v1m0 1v1m0 2v1m0 1v1m0 1v1m0 1v1m0 2v1m0 1v1m0 1v1m0 2v1m0 1v1m0 1v1m0 2v1m0 1v1m0 1v1m0 1v1m0 2v1m0 1v1m0 1v1m0 2v1m0 1v1m0 1v1m0 2v1m0 1v1m0 1v1m0 4v1m0 1v1m0 1v1m0 2v1m0 1v1m0 1v1m0 2v1m0 1v1m0 1v1m0 1v1m0 2v1m0 1v1m0 1v1m0 2v1m0 1v1m0 1v1m0 2v1m0 1v1m0 1v1m0 1v1m0 2v1m0 1v1m0 1v1m0 2v1M405.5 409v1m0 1v1m0 2v1m0 1v1m0 1v1m0 1v1m0 2v1m0 1v1m0 1v1m0 2v1m0 1v1m0 1v1m0 2v1m0 1v1m0 1v1m0 1v1m0 2v1m0 1v1m0 1v1m0 2v1m0 1v1m0 1v1m0 2v1m0 1v1m0 1v1m0 1v1m0 2v1m0 1v1m0 1v1m0 2v1m0 3v1m0 2v1m0 1v1m0 1v1m0 1v1m0 2v1m0 1v1m0 1v1m0 2v1m0 1v1m0 1v1m0 2v1m0 1v1m0 1v1m0 1v1m0 2v1m0 1v1m0 1v1m0 2v1M405.5 526v1m0 1v1m0 2v1m0 1v1m0 1v1m0 1v1m0 2v1m0 1v1m0 1v1m0 2v1m0 1v1m0 1v1m0 2v1m0 1v1m0 1v1m0 1v1m0 2v1m0 1v1m0 1v1m0 2v1m0 1v1m0 1v1m0 2v1m0 1v1m0 1v1m0 4v1m0 1v1m0 1v1m0 2v1m0 1v1m0 1v1m0 2v1m0 1v1m0 1v1m0 1v1m0 2v1m0 1v1m0 1v1m0 2v1m0 1v1m0 1v1m0 2v1m0 1v1m0 1v1m0 1v1m0 2v1m0 1v1m0 1v1m0 2v1M405.5 643v1m0 1v1m0 2v1m0 1v1m0 1v1m0 1v1m0 2v1m0 1v1m0 1v1m0 2v1m0 1v1m0 1v1m0 2v1m0 1v1m0 1v1m0 1v1m0 2v1m0 1v1m0 1v1m0 2v1m0 1v1m0 1v1m0 2v1m0 1v1m0 1v1m0 1v1m0 2v1m0 1v1m0 1v1m0 2v1m0 1v1m0 1v1m0 2v1m0 1v1m0 1v1m0 1v1m0 2v1m0 1v1m0 1v1m0 2v1m0 1v1m0 1v1m0 2v1m0 1v1M405.5 760v1m0 1v1m0 2v1m0 1v1m0 1v1m0 1v1m0 2v1m0 1v1m0 1v1m0 2v1m0 1v1m0 1v1m0 2v1m0 1v1m0 1v1m0 1v1m0 2v1m0 1v1m0 1v1m0 2v1m0 1v1m0 1v1m0 2v1m0 1v1m0 1v1m0 1v1m0 2v1m0 1v1m0 1v1m0 2v1m0 1v1m0 1v1m0 2v1m0 1v1m0 1v1m0 1v1m0 2v1m0 1v1m0 1v1m0 2v1m0 1v1m0 1v1m0 2v1m0 1v1m0 1v1m0 4v1m0 1v1m0 1v1m0 2v1M405.5 878v1m0 1v1m0 1v1m0 2v1m0 1v1m0 1v1m0 2v1m0 1v1m0 1v1m0 2v1m0 1v1m0 1v1m0 1v1m0 2v1m0 1v1m0 1v1m0 2v1m0 1v1m0 1v1m0 2v1m0 1v1m0 1v1m0 1v1m0 2v1m0 1v1m0 1v1m0 2v1m0 1v1m0 1v1m0 2v1m0 1v1m0 1v1m0 1v1m0 2v1m0 1v1m0 1v1m0 2v1m0 1v1m0 1v1m0 2v1m0 1v1m0 3v1m0 2v1m0 1v1m0 1v1m0 2v1m0 1v1m0 1v1m0 2v1M580.5 58v1m0 1v1m0 2v1m0 1v1m0 1v1m0 1v1m0 2v1m0 1v1m0 1v1m0 2v1m0 1v1m0 1v1m0 2v1m0 1v1m0 1v1m0 1v1m0 2v1m0 1v1m0 1v1m0 2v1m0 1v1m0 1v1m0 2v1m0 1v1m0 1v1m0 1v1m0 2v1m0 1v1m0 1v1m0 2v1m0 1v1m0 1v1m0 2v1m0 1v1m0 1v1m0 1v1m0 2v1m0 1v1m0 1v1m0 2v1m0 1v1m0 1v1m0 2v1m0 1v1m0 1v1m0 4v1m0 1v1m0 1v1m0 2v1M580.5 175v1m0 1v1m0 2v1m0 1v1m0 1v1m0 2v1m0 1v1m0 1v1m0 2v1m0 1v1m0 1v1m0 1v1m0 2v1m0 1v1m0 1v1m0 2v1m0 1v1m0 1v1m0 2v1m0 1v1m0 1v1m0 1v1m0 2v1m0 1v1m0 1v1m0 2v1m0 1v1m0 1v1m0 2v1m0 1v1m0 1v1m0 4v1m0 1v1m0 1v1m0 2v1m0 1v1m0 1v1m0 2v1m0 1v1m0 1v1m0 1v1m0 2v1m0 1v1m0 1v1m0 2v1m0 1v1m0 1v1m0 2v1m0 1v1M580.5 292v1m0 1v1m0 2v1m0 1v1m0 1v1m0 1v1m0 2v1m0 1v1m0 1v1m0 2v1m0 1v1m0 1v1m0 2v1m0 1v1m0 1v1m0 1v1m0 2v1m0 1v1m0 1v1m0 2v1m0 1v1m0 1v1m0 2v1m0 1v1m0 1v1m0 4v1m0 1v1m0 1v1m0 2v1m0 1v1m0 1v1m0 2v1m0 1v1m0 1v1m0 1v1m0 2v1m0 1v1m0 1v1m0 2v1m0 1v1m0 1v1m0 2v1m0 1v1m0 1v1m0 1v1m0 2v1m0 1v1m0 1v1m0 2v1M580.5 409v1m0 1v1m0 2v1m0 1v1m0 1v1m0 1v1m0 2v1m0 1v1m0 1v1m0 2v1m0 1v1m0 1v1m0 2v1m0 1v1m0 1v1m0 1v1m0 2v1m0 1v1m0 1v1m0 2v1m0 1v1m0 1v1m0 2v1m0 1v1m0 1v1m0 1v1m0 2v1m0 1v1m0 1v1m0 2v1m0 3v1m0 2v1m0 1v1m0 1v1m0 1v1m0 2v1m0 1v1m0 1v1m0 2v1m0 1v1m0 1v1m0 2v1m0 1v1m0 1v1m0 1v1m0 2v1m0 1v1m0 1v1m0 2v1M580.5 526v1m0 1v1m0 2v1m0 1v1m0 1v1m0 1v1m0 2v1m0 1v1m0 1v1m0 2v1m0 1v1m0 1v1m0 2v1m0 1v1m0 1v1m0 1v1m0 2v1m0 1v1m0 1v1m0 2v1m0 1v1m0 1v1m0 2v1m0 1v1m0 1v1m0 4v1m0 1v1m0 1v1m0 2v1m0 1v1m0 1v1m0 2v1m0 1v1m0 1v1m0 1v1m0 2v1m0 1v1m0 1v1m0 2v1m0 1v1m0 1v1m0 2v1m0 1v1m0 1v1m0 1v1m0 2v1m0 1v1m0 1v1m0 2v1M580.5 643v1m0 1v1m0 2v1m0 1v1m0 1v1m0 1v1m0 2v1m0 1v1m0 1v1m0 2v1m0 1v1m0 1v1m0 2v1m0 1v1m0 1v1m0 1v1m0 2v1m0 1v1m0 1v1m0 2v1m0 1v1m0 1v1m0 2v1m0 1v1m0 1v1m0 1v1m0 2v1m0 1v1m0 1v1m0 2v1m0 1v1m0 1v1m0 2v1m0 1v1m0 1v1m0 1v1m0 2v1m0 1v1m0 1v1m0 2v1m0 1v1m0 1v1m0 2v1m0 1v1M580.5 760v1m0 1v1m0 2v1m0 1v1m0 1v1m0 1v1m0 2v1m0 1v1m0 1v1m0 2v1m0 1v1m0 1v1m0 2v1m0 1v1m0 1v1m0 1v1m0 2v1m0 1v1m0 1v1m0 2v1m0 1v1m0 1v1m0 2v1m0 1v1m0 1v1m0 1v1m0 2v1m0 1v1m0 1v1m0 2v1m0 1v1m0 1v1m0 2v1m0 1v1m0 1v1m0 1v1m0 2v1m0 1v1m0 1v1m0 2v1m0 1v1m0 1v1m0 2v1m0 1v1m0 1v1m0 4v1m0 1v1m0 1v1m0 2v1M580.5 878v1m0 1v1m0 1v1m0 2v1m0 1v1m0 1v1m0 2v1m0 1v1m0 1v1m0 2v1m0 1v1m0 1v1m0 1v1m0 2v1m0 1v1m0 1v1m0 2v1m0 1v1m0 1v1m0 2v1m0 1v1m0 1v1m0 1v1m0 2v1m0 1v1m0 1v1m0 2v1m0 1v1m0 1v1m0 2v1m0 1v1m0 1v1m0 1v1m0 2v1m0 1v1m0 1v1m0 2v1m0 1v1m0 1v1m0 2v1m0 1v1m0 3v1m0 2v1m0 1v1m0 1v1m0 2v1m0 1v1m0 1v1m0 2v1M755.5 58v1m0 1v1m0 2v1m0 1v1m0 1v1m0 1v1m0 2v1m0 1v1m0 1v1m0 2v1m0 1v1m0 1v1m0 2v1m0 1v1m0 1v1m0 1v1m0 2v1m0 1v1m0 1v1m0 2v1m0 1v1m0 1v1m0 2v1m0 1v1m0 1v1m0 1v1m0 2v1m0 1v1m0 1v1m0 2v1m0 1v1m0 1v1m0 2v1m0 1v1m0 1v1m0 1v1m0 2v1m0 1v1m0 1v1m0 2v1m0 1v1m0 1v1m0 2v1m0 1v1m0 1v1m0 4v1m0 1v1m0 1v1m0 2v1M755.5 175v1m0 1v1m0 2v1m0 1v1m0 1v1m0 2v1m0 1v1m0 1v1m0 2v1m0 1v1m0 1v1m0 1v1m0 2v1m0 1v1m0 1v1m0 2v1m0 1v1m0 1v1m0 2v1m0 1v1m0 1v1m0 1v1m0 2v1m0 1v1m0 1v1m0 2v1m0 1v1m0 1v1m0 2v1m0 1v1m0 1v1m0 4v1m0 1v1m0 1v1m0 2v1m0 1v1m0 1v1m0 2v1m0 1v1m0 1v1m0 1v1m0 2v1m0 1v1m0 1v1m0 2v1m0 1v1m0 1v1m0 2v1m0 1v1M755.5 292v1m0 1v1m0 2v1m0 1v1m0 1v1m0 1v1m0 2v1m0 1v1m0 1v1m0 2v1m0 1v1m0 1v1m0 2v1m0 1v1m0 1v1m0 1v1m0 2v1m0 1v1m0 1v1m0 2v1m0 1v1m0 1v1m0 2v1m0 1v1m0 1v1m0 4v1m0 1v1m0 1v1m0 2v1m0 1v1m0 1v1m0 2v1m0 1v1m0 1v1m0 1v1m0 2v1m0 1v1m0 1v1m0 2v1m0 1v1m0 1v1m0 2v1m0 1v1m0 1v1m0 1v1m0 2v1m0 1v1m0 1v1m0 2v1M755.5 409v1m0 1v1m0 2v1m0 1v1m0 1v1m0 1v1m0 2v1m0 1v1m0 1v1m0 2v1m0 1v1m0 1v1m0 2v1m0 1v1m0 1v1m0 1v1m0 2v1m0 1v1m0 1v1m0 2v1m0 1v1m0 1v1m0 2v1m0 1v1m0 1v1m0 1v1m0 2v1m0 1v1m0 1v1m0 2v1m0 3v1m0 2v1m0 1v1m0 1v1m0 1v1m0 2v1m0 1v1m0 1v1m0 2v1m0 1v1m0 1v1m0 2v1m0 1v1m0 1v1m0 1v1m0 2v1m0 1v1m0 1v1m0 2v1M755.5 526v1m0 1v1m0 2v1m0 1v1m0 1v1m0 1v1m0 2v1m0 1v1m0 1v1m0 2v1m0 1v1m0 1v1m0 2v1m0 1v1m0 1v1m0 1v1m0 2v1m0 1v1m0 1v1m0 2v1m0 1v1m0 1v1m0 2v1m0 1v1m0 1v1m0 4v1m0 1v1m0 1v1m0 2v1m0 1v1m0 1v1m0 2v1m0 1v1m0 1v1m0 1v1m0 2v1m0 1v1m0 1v1m0 2v1m0 1v1m0 1v1m0 2v1m0 1v1m0 1v1m0 1v1m0 2v1m0 1v1m0 1v1m0 2v1M755.5 643v1m0 1v1m0 2v1m0 1v1m0 1v1m0 1v1m0 2v1m0 1v1m0 1v1m0 2v1m0 1v1m0 1v1m0 2v1m0 1v1m0 1v1m0 1v1m0 2v1m0 1v1m0 1v1m0 2v1m0 1v1m0 1v1m0 2v1m0 1v1m0 1v1m0 1v1m0 2v1m0 1v1m0 1v1m0 2v1m0 1v1m0 1v1m0 2v1m0 1v1m0 1v1m0 1v1m0 2v1m0 1v1m0 1v1m0 2v1m0 1v1m0 1v1m0 2v1m0 1v1M755.5 760v1m0 1v1m0 2v1m0 1v1m0 1v1m0 1v1m0 2v1m0 1v1m0 1v1m0 2v1m0 1v1m0 1v1m0 2v1m0 1v1m0 1v1m0 1v1m0 2v1m0 1v1m0 1v1m0 2v1m0 1v1m0 1v1m0 2v1m0 1v1m0 1v1m0 1v1m0 2v1m0 1v1m0 1v1m0 2v1m0 1v1m0 1v1m0 2v1m0 1v1m0 1v1m0 1v1m0 2v1m0 1v1m0 1v1m0 2v1m0 1v1m0 1v1m0 2v1m0 1v1m0 1v1m0 4v1m0 1v1m0 1v1m0 2v1M755.5 878v1m0 1v1m0 1v1m0 2v1m0 1v1m0 1v1m0 2v1m0 1v1m0 1v1m0 2v1m0 1v1m0 1v1m0 1v1m0 2v1m0 1v1m0 1v1m0 2v1m0 1v1m0 1v1m0 2v1m0 1v1m0 1v1m0 1v1m0 2v1m0 1v1m0 1v1m0 2v1m0 1v1m0 1v1m0 2v1m0 1v1m0 1v1m0 1v1m0 2v1m0 1v1m0 1v1m0 2v1m0 1v1m0 1v1m0 2v1m0 1v1m0 3v1m0 2v1m0 1v1m0 1v1m0 2v1m0 1v1m0 1v1m0 2v1M929.5 58v1m0 1v1m0 2v1m0 1v1m0 1v1m0 1v1m0 2v1m0 1v1m0 1v1m0 2v1m0 1v1m0 1v1m0 2v1m0 1v1m0 1v1m0 1v1m0 2v1m0 1v1m0 1v1m0 2v1m0 1v1m0 1v1m0 2v1m0 1v1m0 1v1m0 1v1m0 2v1m0 1v1m0 1v1m0 2v1m0 1v1m0 1v1m0 2v1m0 1v1m0 1v1m0 1v1m0 2v1m0 1v1m0 1v1m0 2v1m0 1v1m0 1v1m0 2v1m0 1v1m0 1v1m0 4v1m0 1v1m0 1v1m0 2v1M929.5 175v1m0 1v1m0 2v1m0 1v1m0 1v1m0 2v1m0 1v1m0 1v1m0 2v1m0 1v1m0 1v1m0 1v1m0 2v1m0 1v1m0 1v1m0 2v1m0 1v1m0 1v1m0 2v1m0 1v1m0 1v1m0 1v1m0 2v1m0 1v1m0 1v1m0 2v1m0 1v1m0 1v1m0 2v1m0 1v1m0 1v1m0 4v1m0 1v1m0 1v1m0 2v1m0 1v1m0 1v1m0 2v1m0 1v1m0 1v1m0 1v1m0 2v1m0 1v1m0 1v1m0 2v1m0 1v1m0 1v1m0 2v1m0 1v1M929.5 292v1m0 1v1m0 2v1m0 1v1m0 1v1m0 1v1m0 2v1m0 1v1m0 1v1m0 2v1m0 1v1m0 1v1m0 2v1m0 1v1m0 1v1m0 1v1m0 2v1m0 1v1m0 1v1m0 2v1m0 1v1m0 1v1m0 2v1m0 1v1m0 1v1m0 4v1m0 1v1m0 1v1m0 2v1m0 1v1m0 1v1m0 2v1m0 1v1m0 1v1m0 1v1m0 2v1m0 1v1m0 1v1m0 2v1m0 1v1m0 1v1m0 2v1m0 1v1m0 1v1m0 1v1m0 2v1m0 1v1m0 1v1m0 2v1M929.5 409v1m0 1v1m0 2v1m0 1v1m0 1v1m0 1v1m0 2v1m0 1v1m0 1v1m0 2v1m0 1v1m0 1v1m0 2v1m0 1v1m0 1v1m0 1v1m0 2v1m0 1v1m0 1v1m0 2v1m0 1v1m0 1v1m0 2v1m0 1v1m0 1v1m0 1v1m0 2v1m0 1v1m0 1v1m0 2v1m0 3v1m0 2v1m0 1v1m0 1v1m0 1v1m0 2v1m0 1v1m0 1v1m0 2v1m0 1v1m0 1v1m0 2v1m0 1v1m0 1v1m0 1v1m0 2v1m0 1v1m0 1v1m0 2v1M929.5 526v1m0 1v1m0 2v1m0 1v1m0 1v1m0 1v1m0 2v1m0 1v1m0 1v1m0 2v1m0 1v1m0 1v1m0 2v1m0 1v1m0 1v1m0 1v1m0 2v1m0 1v1m0 1v1m0 2v1m0 1v1m0 1v1m0 2v1m0 1v1m0 1v1m0 4v1m0 1v1m0 1v1m0 2v1m0 1v1m0 1v1m0 2v1m0 1v1m0 1v1m0 1v1m0 2v1m0 1v1m0 1v1m0 2v1m0 1v1m0 1v1m0 2v1m0 1v1m0 1v1m0 1v1m0 2v1m0 1v1m0 1v1m0 2v1M929.5 643v1m0 1v1m0 2v1m0 1v1m0 1v1m0 1v1m0 2v1m0 1v1m0 1v1m0 2v1m0 1v1m0 1v1m0 2v1m0 1v1m0 1v1m0 1v1m0 2v1m0 1v1m0 1v1m0 2v1m0 1v1m0 1v1m0 2v1m0 1v1m0 1v1m0 1v1m0 2v1m0 1v1m0 1v1m0 2v1m0 1v1m0 1v1m0 2v1m0 1v1m0 1v1m0 1v1m0 2v1m0 1v1m0 1v1m0 2v1m0 1v1m0 1v1m0 2v1m0 1v1M929.5 760v1m0 1v1m0 2v1m0 1v1m0 1v1m0 1v1m0 2v1m0 1v1m0 1v1m0 2v1m0 1v1m0 1v1m0 2v1m0 1v1m0 1v1m0 1v1m0 2v1m0 1v1m0 1v1m0 2v1m0 1v1m0 1v1m0 2v1m0 1v1m0 1v1m0 1v1m0 2v1m0 1v1m0 1v1m0 2v1m0 1v1m0 1v1m0 2v1m0 1v1m0 1v1m0 1v1m0 2v1m0 1v1m0 1v1m0 2v1m0 1v1m0 1v1m0 2v1m0 1v1m0 1v1m0 4v1m0 1v1m0 1v1m0 2v1M929.5 878v1m0 1v1m0 1v1m0 2v1m0 1v1m0 1v1m0 2v1m0 1v1m0 1v1m0 2v1m0 1v1m0 1v1m0 1v1m0 2v1m0 1v1m0 1v1m0 2v1m0 1v1m0 1v1m0 2v1m0 1v1m0 1v1m0 1v1m0 2v1m0 1v1m0 1v1m0 2v1m0 1v1m0 1v1m0 2v1m0 1v1m0 1v1m0 1v1m0 2v1m0 1v1m0 1v1m0 2v1m0 1v1m0 1v1m0 2v1m0 1v1m0 3v1m0 2v1m0 1v1m0 1v1m0 2v1m0 1v1m0 1v1m0 2v1M1104.5 58v1m0 1v1m0 2v1m0 1v1m0 1v1m0 1v1m0 2v1m0 1v1m0 1v1m0 2v1m0 1v1m0 1v1m0 2v1m0 1v1m0 1v1m0 1v1m0 2v1m0 1v1m0 1v1m0 2v1m0 1v1m0 1v1m0 2v1m0 1v1m0 1v1m0 1v1m0 2v1m0 1v1m0 1v1m0 2v1m0 1v1m0 1v1m0 2v1m0 1v1m0 1v1m0 1v1m0 2v1m0 1v1m0 1v1m0 2v1m0 1v1m0 1v1m0 2v1m0 1v1m0 1v1m0 4v1m0 1v1m0 1v1m0 2v1M1104.5 175v1m0 1v1m0 2v1m0 1v1m0 1v1m0 2v1m0 1v1m0 1v1m0 2v1m0 1v1m0 1v1m0 1v1m0 2v1m0 1v1m0 1v1m0 2v1m0 1v1m0 1v1m0 2v1m0 1v1m0 1v1m0 1v1m0 2v1m0 1v1m0 1v1m0 2v1m0 1v1m0 1v1m0 2v1m0 1v1m0 1v1m0 4v1m0 1v1m0 1v1m0 2v1m0 1v1m0 1v1m0 2v1m0 1v1m0 1v1m0 1v1m0 2v1m0 1v1m0 1v1m0 2v1m0 1v1m0 1v1m0 2v1m0 1v1M1104.5 292v1m0 1v1m0 2v1m0 1v1m0 1v1m0 1v1m0 2v1m0 1v1m0 1v1m0 2v1m0 1v1m0 1v1m0 2v1m0 1v1m0 1v1m0 1v1m0 2v1m0 1v1m0 1v1m0 2v1m0 1v1m0 1v1m0 2v1m0 1v1m0 1v1m0 4v1m0 1v1m0 1v1m0 2v1m0 1v1m0 1v1m0 2v1m0 1v1m0 1v1m0 1v1m0 2v1m0 1v1m0 1v1m0 2v1m0 1v1m0 1v1m0 2v1m0 1v1m0 1v1m0 1v1m0 2v1m0 1v1m0 1v1m0 2v1M1104.5 409v1m0 1v1m0 2v1m0 1v1m0 1v1m0 1v1m0 2v1m0 1v1m0 1v1m0 2v1m0 1v1m0 1v1m0 2v1m0 1v1m0 1v1m0 1v1m0 2v1m0 1v1m0 1v1m0 2v1m0 1v1m0 1v1m0 2v1m0 1v1m0 1v1m0 1v1m0 2v1m0 1v1m0 1v1m0 2v1m0 3v1m0 2v1m0 1v1m0 1v1m0 1v1m0 2v1m0 1v1m0 1v1m0 2v1m0 1v1m0 1v1m0 2v1m0 1v1m0 1v1m0 1v1m0 2v1m0 1v1m0 1v1m0 2v1M1104.5 526v1m0 1v1m0 2v1m0 1v1m0 1v1m0 1v1m0 2v1m0 1v1m0 1v1m0 2v1m0 1v1m0 1v1m0 2v1m0 1v1m0 1v1m0 1v1m0 2v1m0 1v1m0 1v1m0 2v1m0 1v1m0 1v1m0 2v1m0 1v1m0 1v1m0 4v1m0 1v1m0 1v1m0 2v1m0 1v1m0 1v1m0 2v1m0 1v1m0 1v1m0 1v1m0 2v1m0 1v1m0 1v1m0 2v1m0 1v1m0 1v1m0 2v1m0 1v1m0 1v1m0 1v1m0 2v1m0 1v1m0 1v1m0 2v1M1104.5 643v1m0 1v1m0 2v1m0 1v1m0 1v1m0 1v1m0 2v1m0 1v1m0 1v1m0 2v1m0 1v1m0 1v1m0 2v1m0 1v1m0 1v1m0 1v1m0 2v1m0 1v1m0 1v1m0 2v1m0 1v1m0 1v1m0 2v1m0 1v1m0 1v1m0 1v1m0 2v1m0 1v1m0 1v1m0 2v1m0 1v1m0 1v1m0 2v1m0 1v1m0 1v1m0 1v1m0 2v1m0 1v1m0 1v1m0 2v1m0 1v1m0 1v1m0 2v1m0 1v1M1104.5 760v1m0 1v1m0 2v1m0 1v1m0 1v1m0 1v1m0 2v1m0 1v1m0 1v1m0 2v1m0 1v1m0 1v1m0 2v1m0 1v1m0 1v1m0 1v1m0 2v1m0 1v1m0 1v1m0 2v1m0 1v1m0 1v1m0 2v1m0 1v1m0 1v1m0 1v1m0 2v1m0 1v1m0 1v1m0 2v1m0 1v1m0 1v1m0 2v1m0 1v1m0 1v1m0 1v1m0 2v1m0 1v1m0 1v1m0 2v1m0 1v1m0 1v1m0 2v1m0 1v1m0 1v1m0 4v1m0 1v1m0 1v1m0 2v1M1104.5 878v1m0 1v1m0 1v1m0 2v1m0 1v1m0 1v1m0 2v1m0 1v1m0 1v1m0 2v1m0 1v1m0 1v1m0 1v1m0 2v1m0 1v1m0 1v1m0 2v1m0 1v1m0 1v1m0 2v1m0 1v1m0 1v1m0 1v1m0 2v1m0 1v1m0 1v1m0 2v1m0 1v1m0 1v1m0 2v1m0 1v1m0 1v1m0 1v1m0 2v1m0 1v1m0 1v1m0 2v1m0 1v1m0 1v1m0 2v1m0 1v1m0 3v1m0 2v1m0 1v1m0 1v1m0 2v1m0 1v1m0 1v1m0 2v1M1279.5 58v1m0 1v1m0 2v1m0 1v1m0 1v1m0 1v1m0 2v1m0 1v1m0 1v1m0 2v1m0 1v1m0 1v1m0 2v1m0 1v1m0 1v1m0 1v1m0 2v1m0 1v1m0 1v1m0 2v1m0 1v1m0 1v1m0 2v1m0 1v1m0 1v1m0 1v1m0 2v1m0 1v1m0 1v1m0 2v1m0 1v1m0 1v1m0 2v1m0 1v1m0 1v1m0 1v1m0 2v1m0 1v1m0 1v1m0 2v1m0 1v1m0 1v1m0 2v1m0 1v1m0 1v1m0 4v1m0 1v1m0 1v1m0 2v1M1279.5 175v1m0 1v1m0 2v1m0 1v1m0 1v1m0 2v1m0 1v1m0 1v1m0 2v1m0 1v1m0 1v1m0 1v1m0 2v1m0 1v1m0 1v1m0 2v1m0 1v1m0 1v1m0 2v1m0 1v1m0 1v1m0 1v1m0 2v1m0 1v1m0 1v1m0 2v1m0 1v1m0 1v1m0 2v1m0 1v1m0 1v1m0 4v1m0 1v1m0 1v1m0 2v1m0 1v1m0 1v1m0 2v1m0 1v1m0 1v1m0 1v1m0 2v1m0 1v1m0 1v1m0 2v1m0 1v1m0 1v1m0 2v1m0 1v1M1279.5 292v1m0 1v1m0 2v1m0 1v1m0 1v1m0 1v1m0 2v1m0 1v1m0 1v1m0 2v1m0 1v1m0 1v1m0 2v1m0 1v1m0 1v1m0 1v1m0 2v1m0 1v1m0 1v1m0 2v1m0 1v1m0 1v1m0 2v1m0 1v1m0 1v1m0 4v1m0 1v1m0 1v1m0 2v1m0 1v1m0 1v1m0 2v1m0 1v1m0 1v1m0 1v1m0 2v1m0 1v1m0 1v1m0 2v1m0 1v1m0 1v1m0 2v1m0 1v1m0 1v1m0 1v1m0 2v1m0 1v1m0 1v1m0 2v1M1279.5 409v1m0 1v1m0 2v1m0 1v1m0 1v1m0 1v1m0 2v1m0 1v1m0 1v1m0 2v1m0 1v1m0 1v1m0 2v1m0 1v1m0 1v1m0 1v1m0 2v1m0 1v1m0 1v1m0 2v1m0 1v1m0 1v1m0 2v1m0 1v1m0 1v1m0 1v1m0 2v1m0 1v1m0 1v1m0 2v1m0 3v1m0 2v1m0 1v1m0 1v1m0 1v1m0 2v1m0 1v1m0 1v1m0 2v1m0 1v1m0 1v1m0 2v1m0 1v1m0 1v1m0 1v1m0 2v1m0 1v1m0 1v1m0 2v1M1279.5 526v1m0 1v1m0 2v1m0 1v1m0 1v1m0 1v1m0 2v1m0 1v1m0 1v1m0 2v1m0 1v1m0 1v1m0 2v1m0 1v1m0 1v1m0 1v1m0 2v1m0 1v1m0 1v1m0 2v1m0 1v1m0 1v1m0 2v1m0 1v1m0 1v1m0 4v1m0 1v1m0 1v1m0 2v1m0 1v1m0 1v1m0 2v1m0 1v1m0 1v1m0 1v1m0 2v1m0 1v1m0 1v1m0 2v1m0 1v1m0 1v1m0 2v1m0 1v1m0 1v1m0 1v1m0 2v1m0 1v1m0 1v1m0 2v1M1279.5 643v1m0 1v1m0 2v1m0 1v1m0 1v1m0 1v1m0 2v1m0 1v1m0 1v1m0 2v1m0 1v1m0 1v1m0 2v1m0 1v1m0 1v1m0 1v1m0 2v1m0 1v1m0 1v1m0 2v1m0 1v1m0 1v1m0 2v1m0 1v1m0 1v1m0 1v1m0 2v1m0 1v1m0 1v1m0 2v1m0 1v1m0 1v1m0 2v1m0 1v1m0 1v1m0 1v1m0 2v1m0 1v1m0 1v1m0 2v1m0 1v1m0 1v1m0 2v1m0 1v1M1279.5 760v1m0 1v1m0 2v1m0 1v1m0 1v1m0 1v1m0 2v1m0 1v1m0 1v1m0 2v1m0 1v1m0 1v1m0 2v1m0 1v1m0 1v1m0 1v1m0 2v1m0 1v1m0 1v1m0 2v1m0 1v1m0 1v1m0 2v1m0 1v1m0 1v1m0 1v1m0 2v1m0 1v1m0 1v1m0 2v1m0 1v1m0 1v1m0 2v1m0 1v1m0 1v1m0 1v1m0 2v1m0 1v1m0 1v1m0 2v1m0 1v1m0 1v1m0 2v1m0 1v1m0 1v1m0 4v1m0 1v1m0 1v1m0 2v1M1279.5 878v1m0 1v1m0 1v1m0 2v1m0 1v1m0 1v1m0 2v1m0 1v1m0 1v1m0 2v1m0 1v1m0 1v1m0 1v1m0 2v1m0 1v1m0 1v1m0 2v1m0 1v1m0 1v1m0 2v1m0 1v1m0 1v1m0 1v1m0 2v1m0 1v1m0 1v1m0 2v1m0 1v1m0 1v1m0 2v1m0 1v1m0 1v1m0 1v1m0 2v1m0 1v1m0 1v1m0 2v1m0 1v1m0 1v1m0 2v1m0 1v1m0 3v1m0 2v1m0 1v1m0 1v1m0 2v1m0 1v1m0 1v1m0 2v1M1454.5 58v1m0 1v1m0 2v1m0 1v1m0 1v1m0 1v1m0 2v1m0 1v1m0 1v1m0 2v1m0 1v1m0 1v1m0 2v1m0 1v1m0 1v1m0 1v1m0 2v1m0 1v1m0 1v1m0 2v1m0 1v1m0 1v1m0 2v1m0 1v1m0 1v1m0 1v1m0 2v1m0 1v1m0 1v1m0 2v1m0 1v1m0 1v1m0 2v1m0 1v1m0 1v1m0 1v1m0 2v1m0 1v1m0 1v1m0 2v1m0 1v1m0 1v1m0 2v1m0 1v1m0 1v1m0 4v1m0 1v1m0 1v1m0 2v1M1454.5 175v1m0 1v1m0 2v1m0 1v1m0 1v1m0 2v1m0 1v1m0 1v1m0 2v1m0 1v1m0 1v1m0 1v1m0 2v1m0 1v1m0 1v1m0 2v1m0 1v1m0 1v1m0 2v1m0 1v1m0 1v1m0 1v1m0 2v1m0 1v1m0 1v1m0 2v1m0 1v1m0 1v1m0 2v1m0 1v1m0 1v1m0 4v1m0 1v1m0 1v1m0 2v1m0 1v1m0 1v1m0 2v1m0 1v1m0 1v1m0 1v1m0 2v1m0 1v1m0 1v1m0 2v1m0 1v1m0 1v1m0 2v1m0 1v1M1454.5 292v1m0 1v1m0 2v1m0 1v1m0 1v1m0 1v1m0 2v1m0 1v1m0 1v1m0 2v1m0 1v1m0 1v1m0 2v1m0 1v1m0 1v1m0 1v1m0 2v1m0 1v1m0 1v1m0 2v1m0 1v1m0 1v1m0 2v1m0 1v1m0 1v1m0 4v1m0 1v1m0 1v1m0 2v1m0 1v1m0 1v1m0 2v1m0 1v1m0 1v1m0 1v1m0 2v1m0 1v1m0 1v1m0 2v1m0 1v1m0 1v1m0 2v1m0 1v1m0 1v1m0 1v1m0 2v1m0 1v1m0 1v1m0 2v1M1454.5 409v1m0 1v1m0 2v1m0 1v1m0 1v1m0 1v1m0 2v1m0 1v1m0 1v1m0 2v1m0 1v1m0 1v1m0 2v1m0 1v1m0 1v1m0 1v1m0 2v1m0 1v1m0 1v1m0 2v1m0 1v1m0 1v1m0 2v1m0 1v1m0 1v1m0 1v1m0 2v1m0 1v1m0 1v1m0 2v1m0 3v1m0 2v1m0 1v1m0 1v1m0 1v1m0 2v1m0 1v1m0 1v1m0 2v1m0 1v1m0 1v1m0 2v1m0 1v1m0 1v1m0 1v1m0 2v1m0 1v1m0 1v1m0 2v1M1454.5 526v1m0 1v1m0 2v1m0 1v1m0 1v1m0 1v1m0 2v1m0 1v1m0 1v1m0 2v1m0 1v1m0 1v1m0 2v1m0 1v1m0 1v1m0 1v1m0 2v1m0 1v1m0 1v1m0 2v1m0 1v1m0 1v1m0 2v1m0 1v1m0 1v1m0 4v1m0 1v1m0 1v1m0 2v1m0 1v1m0 1v1m0 2v1m0 1v1m0 1v1m0 1v1m0 2v1m0 1v1m0 1v1m0 2v1m0 1v1m0 1v1m0 2v1m0 1v1m0 1v1m0 1v1m0 2v1m0 1v1m0 1v1m0 2v1M1454.5 643v1m0 1v1m0 2v1m0 1v1m0 1v1m0 1v1m0 2v1m0 1v1m0 1v1m0 2v1m0 1v1m0 1v1m0 2v1m0 1v1m0 1v1m0 1v1m0 2v1m0 1v1m0 1v1m0 2v1m0 1v1m0 1v1m0 2v1m0 1v1m0 1v1m0 1v1m0 2v1m0 1v1m0 1v1m0 2v1m0 1v1m0 1v1m0 2v1m0 1v1m0 1v1m0 1v1m0 2v1m0 1v1m0 1v1m0 2v1m0 1v1m0 1v1m0 2v1m0 1v1M1454.5 760v1m0 1v1m0 2v1m0 1v1m0 1v1m0 1v1m0 2v1m0 1v1m0 1v1m0 2v1m0 1v1m0 1v1m0 2v1m0 1v1m0 1v1m0 1v1m0 2v1m0 1v1m0 1v1m0 2v1m0 1v1m0 1v1m0 2v1m0 1v1m0 1v1m0 1v1m0 2v1m0 1v1m0 1v1m0 2v1m0 1v1m0 1v1m0 2v1m0 1v1m0 1v1m0 1v1m0 2v1m0 1v1m0 1v1m0 2v1m0 1v1m0 1v1m0 2v1m0 1v1m0 1v1m0 4v1m0 1v1m0 1v1m0 2v1M1454.5 878v1m0 1v1m0 1v1m0 2v1m0 1v1m0 1v1m0 2v1m0 1v1m0 1v1m0 2v1m0 1v1m0 1v1m0 1v1m0 2v1m0 1v1m0 1v1m0 2v1m0 1v1m0 1v1m0 2v1m0 1v1m0 1v1m0 1v1m0 2v1m0 1v1m0 1v1m0 2v1m0 1v1m0 1v1m0 2v1m0 1v1m0 1v1m0 1v1m0 2v1m0 1v1m0 1v1m0 2v1m0 1v1m0 1v1m0 2v1m0 1v1m0 3v1m0 2v1m0 1v1m0 1v1m0 2v1m0 1v1m0 1v1m0 2v1M1629.5 58v1m0 1v1m0 2v1m0 1v1m0 1v1m0 1v1m0 2v1m0 1v1m0 1v1m0 2v1m0 1v1m0 1v1m0 2v1m0 1v1m0 1v1m0 1v1m0 2v1m0 1v1m0 1v1m0 2v1m0 1v1m0 1v1m0 2v1m0 1v1m0 1v1m0 1v1m0 2v1m0 1v1m0 1v1m0 2v1m0 1v1m0 1v1m0 2v1m0 1v1m0 1v1m0 1v1m0 2v1m0 1v1m0 1v1m0 2v1m0 1v1m0 1v1m0 2v1m0 1v1m0 1v1m0 4v1m0 1v1m0 1v1m0 2v1M1629.5 175v1m0 1v1m0 2v1m0 1v1m0 1v1m0 2v1m0 1v1m0 1v1m0 2v1m0 1v1m0 1v1m0 1v1m0 2v1m0 1v1m0 1v1m0 2v1m0 1v1m0 1v1m0 2v1m0 1v1m0 1v1m0 1v1m0 2v1m0 1v1m0 1v1m0 2v1m0 1v1m0 1v1m0 2v1m0 1v1m0 1v1m0 4v1m0 1v1m0 1v1m0 2v1m0 1v1m0 1v1m0 2v1m0 1v1m0 1v1m0 1v1m0 2v1m0 1v1m0 1v1m0 2v1m0 1v1m0 1v1m0 2v1m0 1v1M1629.5 292v1m0 1v1m0 2v1m0 1v1m0 1v1m0 1v1m0 2v1m0 1v1m0 1v1m0 2v1m0 1v1m0 1v1m0 2v1m0 1v1m0 1v1m0 1v1m0 2v1m0 1v1m0 1v1m0 2v1m0 1v1m0 1v1m0 2v1m0 1v1m0 1v1m0 4v1m0 1v1m0 1v1m0 2v1m0 1v1m0 1v1m0 2v1m0 1v1m0 1v1m0 1v1m0 2v1m0 1v1m0 1v1m0 2v1m0 1v1m0 1v1m0 2v1m0 1v1m0 1v1m0 1v1m0 2v1m0 1v1m0 1v1m0 2v1M1629.5 409v1m0 1v1m0 2v1m0 1v1m0 1v1m0 1v1m0 2v1m0 1v1m0 1v1m0 2v1m0 1v1m0 1v1m0 2v1m0 1v1m0 1v1m0 1v1m0 2v1m0 1v1m0 1v1m0 2v1m0 1v1m0 1v1m0 2v1m0 1v1m0 1v1m0 1v1m0 2v1m0 1v1m0 1v1m0 2v1m0 3v1m0 2v1m0 1v1m0 1v1m0 1v1m0 2v1m0 1v1m0 1v1m0 2v1m0 1v1m0 1v1m0 2v1m0 1v1m0 1v1m0 1v1m0 2v1m0 1v1m0 1v1m0 2v1M1629.5 526v1m0 1v1m0 2v1m0 1v1m0 1v1m0 1v1m0 2v1m0 1v1m0 1v1m0 2v1m0 1v1m0 1v1m0 2v1m0 1v1m0 1v1m0 1v1m0 2v1m0 1v1m0 1v1m0 2v1m0 1v1m0 1v1m0 2v1m0 1v1m0 1v1m0 4v1m0 1v1m0 1v1m0 2v1m0 1v1m0 1v1m0 2v1m0 1v1m0 1v1m0 1v1m0 2v1m0 1v1m0 1v1m0 2v1m0 1v1m0 1v1m0 2v1m0 1v1m0 1v1m0 1v1m0 2v1m0 1v1m0 1v1m0 2v1M1629.5 643v1m0 1v1m0 2v1m0 1v1m0 1v1m0 1v1m0 2v1m0 1v1m0 1v1m0 2v1m0 1v1m0 1v1m0 2v1m0 1v1m0 1v1m0 1v1m0 2v1m0 1v1m0 1v1m0 2v1m0 1v1m0 1v1m0 2v1m0 1v1m0 1v1m0 1v1m0 2v1m0 1v1m0 1v1m0 2v1m0 1v1m0 1v1m0 2v1m0 1v1m0 1v1m0 1v1m0 2v1m0 1v1m0 1v1m0 2v1m0 1v1m0 1v1m0 2v1m0 1v1M1629.5 760v1m0 1v1m0 2v1m0 1v1m0 1v1m0 1v1m0 2v1m0 1v1m0 1v1m0 2v1m0 1v1m0 1v1m0 2v1m0 1v1m0 1v1m0 1v1m0 2v1m0 1v1m0 1v1m0 2v1m0 1v1m0 1v1m0 2v1m0 1v1m0 1v1m0 1v1m0 2v1m0 1v1m0 1v1m0 2v1m0 1v1m0 1v1m0 2v1m0 1v1m0 1v1m0 1v1m0 2v1m0 1v1m0 1v1m0 2v1m0 1v1m0 1v1m0 2v1m0 1v1m0 1v1m0 4v1m0 1v1m0 1v1m0 2v1M1629.5 878v1m0 1v1m0 1v1m0 2v1m0 1v1m0 1v1m0 2v1m0 1v1m0 1v1m0 2v1m0 1v1m0 1v1m0 1v1m0 2v1m0 1v1m0 1v1m0 2v1m0 1v1m0 1v1m0 2v1m0 1v1m0 1v1m0 1v1m0 2v1m0 1v1m0 1v1m0 2v1m0 1v1m0 1v1m0 2v1m0 1v1m0 1v1m0 1v1m0 2v1m0 1v1m0 1v1m0 2v1m0 1v1m0 1v1m0 2v1m0 1v1m0 3v1m0 2v1m0 1v1m0 1v1m0 2v1m0 1v1m0 1v1m0 2v1" stroke="#585858" stroke-width="1" fill="none" shape-rendering="crispEdges"/>
<rect x="3" y="173" width="1748" height="2" fill="#666666"/>
<rect x="3" y="290" width="1748" height="2" fill="#666666"/>
<rect x="3" y="407" width="1748" height="2" fill="#666666"/>
<rect x="3" y="524" width="1748" height="2" fill="#666666"/>
<rect x="3" y="641" width="1748" height="2" fill="#666666"/>
<rect x="3" y="758" width="1748" height="2" fill="#666666"/>
<rect x="3" y="875" width="1748" height="2" fill="#666666"/>
<line x1="55.5" x2="55.5" y1="59" y2="173" stroke="#4c4c4c" stroke-width="1" stroke-dasharray="5 5" shape-rendering="crispEdges"/>
<line x1="55.5" x2="55.5" y1="175" y2="290" stroke="#4c4c4c" stroke-width="1" stroke-dasharray="5 5" shape-rendering="crispEdges"/>
<line x1="55.5" x2="55.5" y1="292" y2="407" stroke="#4c4c4c" stroke-width="1" stroke-dasharray="5 5" shape-rendering="crispEdges"/>
<line x1="55.5" x2="55.5" y1="409" y2="524" stroke="#4c4c4c" stroke-width="1" stroke-dasharray="5 5" shape-rendering="crispEdges"/>
<line x1="55.5" x2="55.5" y1="526" y2="641" stroke="#4c4c4c" stroke-width="1" stroke-dasharray="5 5" shape-rendering="crispEdges"/>
<line x1="55.5" x2="55.5" y1="643" y2="758" stroke="#4c4c4c" stroke-width="1" stroke-dasharray="5 5" shape-rendering="crispEdges"/>
<line x1="55.5" x2="55.5" y1="760" y2="875" stroke="#4c4c4c" stroke-width="1" stroke-dasharray="5 5" shape-rendering="crispEdges"/>
<line x1="55.5" x2="55.5" y1="877" y2="993" stroke="#4c4c4c" stroke-width="1" stroke-dasharray="5 5" shape-rendering="crispEdges"/>
<line x1="3" x2="1718" y1="161.5" y2="161.5" stroke="#4c4c4c" stroke-width="1" stroke-dasharray="5 5" shape-rendering="crispEdges"/>
<line x1="3" x2="1740" y1="246.5" y2="246.5" stroke="#4c4c4c" stroke-width="1" stroke-dasharray="5 5" shape-rendering="crispEdges"/>
<line x1="3" x2="1718" y1="349.5" y2="349.5" stroke="#4c4c4c" stroke-width="1" stroke-dasharray="5 5" shape-rendering="crispEdges"/>
<line x1="3" x2="1740" y1="478.5" y2="478.5" stroke="#4c4c4c" stroke-width="1" stroke-dasharray="5 5" shape-rendering="crispEdges"/>
<line x1="3" x2="1751" y1="583.5" y2="583.5" stroke="#4c4c4c" stroke-width="1" stroke-dasharray="5 5" shape-rendering="crispEdges"/>
<line x1="3" x2="1718" y1="863.5" y2="863.5" stroke="#4c4c4c" stroke-width="1" stroke-dasharray="5 5" shape-rendering="crispEdges"/>
<line x1="3" x2="1740" y1="972.5" y2="972.5" stroke="#4c4c4c" stroke-width="1" stroke-dasharray="5 5" shape-rendering="crispEdges"/>
</g>
</svg>
<div id="plotlabels" style="left:0;top:0;width:1920px;height:1080px;will-change:transform">
<span class="t" style="left:1725px;top:156px;font:normal 12px/12px 'DejaVu Sans',sans-serif;color:#000;text-shadow:1px 1px 0 #000;">0 V</span>
<span class="t" style="left:1718px;top:133px;font:normal 12px/12px 'DejaVu Sans',sans-serif;color:#000;text-shadow:1px 1px 0 #000;">10 V</span>
<span class="t" style="left:1718px;top:110px;font:normal 12px/12px 'DejaVu Sans',sans-serif;color:#000;text-shadow:1px 1px 0 #000;">20 V</span>
<span class="t" style="left:1718px;top:87px;font:normal 12px/12px 'DejaVu Sans',sans-serif;color:#000;text-shadow:1px 1px 0 #000;">30 V</span>
<span class="t" style="left:1706px;top:184px;font:normal 12px/12px 'DejaVu Sans',sans-serif;color:#22ccd4;text-shadow:1px 1px 0 #000;">1.25 V</span>
<span class="t" style="left:1698px;top:207px;font:normal 12px/12px 'DejaVu Sans',sans-serif;color:#22ccd4;text-shadow:1px 1px 0 #000;">750 mV</span>
<span class="t" style="left:1698px;top:230px;font:normal 12px/12px 'DejaVu Sans',sans-serif;color:#22ccd4;text-shadow:1px 1px 0 #000;">250 mV</span>
<span class="t" style="left:1694px;top:253px;font:normal 12px/12px 'DejaVu Sans',sans-serif;color:#22ccd4;text-shadow:1px 1px 0 #000;">-250 mV</span>
<span class="t" style="left:1694px;top:276px;font:normal 12px/12px 'DejaVu Sans',sans-serif;color:#22ccd4;text-shadow:1px 1px 0 #000;">-750 mV</span>
<span class="t" style="left:1706px;top:298px;font:normal 12px/12px 'DejaVu Sans',sans-serif;color:#e5284b;text-shadow:1px 1px 0 #000;">1.80 V</span>
<span class="t" style="left:1698px;top:321px;font:normal 12px/12px 'DejaVu Sans',sans-serif;color:#e5284b;text-shadow:1px 1px 0 #000;">900 mV</span>
<span class="t" style="left:1725px;top:344px;font:normal 12px/12px 'DejaVu Sans',sans-serif;color:#e5284b;text-shadow:1px 1px 0 #000;">0 V</span>
<span class="t" style="left:1694px;top:367px;font:normal 12px/12px 'DejaVu Sans',sans-serif;color:#e5284b;text-shadow:1px 1px 0 #000;">-900 mV</span>
<span class="t" style="left:1702px;top:390px;font:normal 12px/12px 'DejaVu Sans',sans-serif;color:#e5284b;text-shadow:1px 1px 0 #000;">-1.80 V</span>
<span class="t" style="left:1725px;top:415px;font:normal 12px/12px 'DejaVu Sans',sans-serif;color:#84c824;text-shadow:1px 1px 0 #000;">1 V</span>
<span class="t" style="left:1698px;top:438px;font:normal 12px/12px 'DejaVu Sans',sans-serif;color:#84c824;text-shadow:1px 1px 0 #000;">600 mV</span>
<span class="t" style="left:1698px;top:461px;font:normal 12px/12px 'DejaVu Sans',sans-serif;color:#84c824;text-shadow:1px 1px 0 #000;">200 mV</span>
<span class="t" style="left:1694px;top:484px;font:normal 12px/12px 'DejaVu Sans',sans-serif;color:#84c824;text-shadow:1px 1px 0 #000;">-200 mV</span>
<span class="t" style="left:1694px;top:507px;font:normal 12px/12px 'DejaVu Sans',sans-serif;color:#84c824;text-shadow:1px 1px 0 #000;">-600 mV</span>
<span class="t" style="left:1725px;top:532px;font:normal 12px/12px 'DejaVu Sans',sans-serif;color:#f59a23;text-shadow:1px 1px 0 #000;">4 V</span>
<span class="t" style="left:1725px;top:555px;font:normal 12px/12px 'DejaVu Sans',sans-serif;color:#f59a23;text-shadow:1px 1px 0 #000;">2 V</span>
<span class="t" style="left:1725px;top:578px;font:normal 12px/12px 'DejaVu Sans',sans-serif;color:#f59a23;text-shadow:1px 1px 0 #000;">0 V</span>
<span class="t" style="left:1721px;top:601px;font:normal 12px/12px 'DejaVu Sans',sans-serif;color:#f59a23;text-shadow:1px 1px 0 #000;">-2 V</span>
<span class="t" style="left:1721px;top:624px;font:normal 12px/12px 'DejaVu Sans',sans-serif;color:#f59a23;text-shadow:1px 1px 0 #000;">-4 V</span>
<span class="t" style="left:1725px;top:649px;font:normal 12px/12px 'DejaVu Sans',sans-serif;color:#2222b4;text-shadow:1px 1px 0 #000;">6 V</span>
<span class="t" style="left:1706px;top:672px;font:normal 12px/12px 'DejaVu Sans',sans-serif;color:#2222b4;text-shadow:1px 1px 0 #000;">4.50 V</span>
<span class="t" style="left:1725px;top:695px;font:normal 12px/12px 'DejaVu Sans',sans-serif;color:#2222b4;text-shadow:1px 1px 0 #000;">3 V</span>
<span class="t" style="left:1706px;top:718px;font:normal 12px/12px 'DejaVu Sans',sans-serif;color:#2222b4;text-shadow:1px 1px 0 #000;">1.50 V</span>
<span class="t" style="left:1725px;top:741px;font:normal 12px/12px 'DejaVu Sans',sans-serif;color:#2222b4;text-shadow:1px 1px 0 #000;">0 V</span>
<span class="t" style="left:1672px;top:766px;font:normal 12px/12px 'DejaVu Sans',sans-serif;color:#f0901f;text-shadow:1px 1px 0 #000;">586.284 mT</span>
<span class="t" style="left:1672px;top:789px;font:normal 12px/12px 'DejaVu Sans',sans-serif;color:#f0901f;text-shadow:1px 1px 0 #000;">439.713 mT</span>
<span class="t" style="left:1672px;top:812px;font:normal 12px/12px 'DejaVu Sans',sans-serif;color:#f0901f;text-shadow:1px 1px 0 #000;">293.142 mT</span>
<span class="t" style="left:1672px;top:835px;font:normal 12px/12px 'DejaVu Sans',sans-serif;color:#f0901f;text-shadow:1px 1px 0 #000;">146.571 mT</span>
<span class="t" style="left:1726px;top:858px;font:normal 12px/12px 'DejaVu Sans',sans-serif;color:#f0901f;text-shadow:1px 1px 0 #000;">0 T</span>
<span class="t" style="left:1669px;top:886px;font:normal 12px/12px 'DejaVu Sans',sans-serif;color:#6a2a8a;text-shadow:1px 1px 0 #000;">4.239783 kA</span>
<span class="t" style="left:1669px;top:909px;font:normal 12px/12px 'DejaVu Sans',sans-serif;color:#6a2a8a;text-shadow:1px 1px 0 #000;">3.028416 kA</span>
<span class="t" style="left:1669px;top:932px;font:normal 12px/12px 'DejaVu Sans',sans-serif;color:#6a2a8a;text-shadow:1px 1px 0 #000;">1.817050 kA</span>
<span class="t" style="left:1683px;top:955px;font:normal 12px/12px 'DejaVu Sans',sans-serif;color:#6a2a8a;text-shadow:1px 1px 0 #000;">605.683 A</span>
<span class="t" style="left:1679px;top:978px;font:normal 12px/12px 'DejaVu Sans',sans-serif;color:#6a2a8a;text-shadow:1px 1px 0 #000;">-605.683 A</span>
<span class="t" style="left:46px;top:742px;font:normal 12px/12px 'DejaVu Sans',sans-serif;color:#333;text-shadow:1px 1px 0 #000;">0 s</span>
<span class="t" style="left:215px;top:742px;font:normal 12px/12px 'DejaVu Sans',sans-serif;color:#333;text-shadow:1px 1px 0 #000;">4 ms</span>
<span class="t" style="left:390px;top:742px;font:normal 12px/12px 'DejaVu Sans',sans-serif;color:#333;text-shadow:1px 1px 0 #000;">8 ms</span>
<span class="t" style="left:560px;top:742px;font:normal 12px/12px 'DejaVu Sans',sans-serif;color:#333;text-shadow:1px 1px 0 #000;">12 ms</span>
<span class="t" style="left:735px;top:742px;font:normal 12px/12px 'DejaVu Sans',sans-serif;color:#333;text-shadow:1px 1px 0 #000;">16 ms</span>
<span class="t" style="left:911px;top:742px;font:normal 12px/12px 'DejaVu Sans',sans-serif;color:#333;text-shadow:1px 1px 0 #000;">20 ms</span>
<span class="t" style="left:1086px;top:742px;font:normal 12px/12px 'DejaVu Sans',sans-serif;color:#333;text-shadow:1px 1px 0 #000;">24 ms</span>
<span class="t" style="left:1260px;top:742px;font:normal 12px/12px 'DejaVu Sans',sans-serif;color:#333;text-shadow:1px 1px 0 #000;">28 ms</span>
<span class="t" style="left:1435px;top:742px;font:normal 12px/12px 'DejaVu Sans',sans-serif;color:#333;text-shadow:1px 1px 0 #000;">32 ms</span>
<span class="t" style="left:1610px;top:742px;font:normal 12px/12px 'DejaVu Sans',sans-serif;color:#333;text-shadow:1px 1px 0 #000;">36 ms</span>
<span class="t" style="left:101px;top:106px;font:normal 18px/18px 'DejaVu Sans',sans-serif;color:#000;letter-spacing:0.2px;text-shadow:0.5px 1px 0 #000;">U<span style="color:#000;position:relative;top:-2px;text-shadow:0 0.7px 0 #000">_</span>loop,coil</span>
<span class="t" style="left:101px;top:223px;font:normal 18px/18px 'DejaVu Sans',sans-serif;color:#22c4cc;letter-spacing:-0.01px;text-shadow:0.5px 1px 0 #000;">U<span style="color:#0a5a5e;position:relative;top:-2px;text-shadow:0 0.7px 0 #0a5a5e">_</span>Bt,coil</span>
<span class="t" style="left:53px;top:340px;font:normal 18px/18px 'DejaVu Sans',sans-serif;color:#e5284b;letter-spacing:-0.01px;text-shadow:0.5px 1px 0 #000;">U<span style="color:#501018;position:relative;top:-2px;text-shadow:0 0.7px 0 #501018">_</span>Rog,coil</span>
<span class="t" style="left:101px;top:457px;font:normal 18px/18px 'DejaVu Sans',sans-serif;color:#7cc01f;letter-spacing:0.34px;text-shadow:0.5px 1px 0 #000;">U<span style="color:#000;position:relative;top:-2px;text-shadow:0 0.7px 0 #000">_</span>Photod</span>
<span class="t" style="left:53px;top:574px;font:normal 18px/18px 'DejaVu Sans',sans-serif;color:#f59a23;letter-spacing:-0.09px;text-shadow:0.5px 1px 0 #000;">U<span style="color:#5a3608;position:relative;top:-2px;text-shadow:0 0.7px 0 #5a3608">_</span>Diamagn</span>
<span class="t" style="left:101px;top:691px;font:normal 18px/18px 'DejaVu Sans',sans-serif;color:#2020b4;letter-spacing:-0.04px;text-shadow:0.5px 1px 0 #000;">Trigger</span>
<span class="t" style="left:53px;top:851px;font:normal 18px/18px 'DejaVu Sans',sans-serif;color:#f0901f;letter-spacing:-0.3px;text-shadow:0.5px 1px 0 #000;">B<span style="color:#c09060;position:relative;top:-2px;text-shadow:0 0.7px 0 #c09060">_</span>t</span>
<span class="t" style="left:53px;top:962px;font:normal 18px/18px 'DejaVu Sans',sans-serif;color:#5e2480;text-shadow:0.5px 1px 0 #000;">I<span style="color:#5e2480;position:relative;top:-2px;text-shadow:0 0.7px 0 #5e2480">_</span>p</span>
</div>
<svg class="abs" style="left:0;top:0" width="1920" height="1080" viewBox="0 0 1920 1080">
<path d="M10.3 102.7H77.4L83.9 115.3L77.4 127.89999999999999H10.3Q6.8 127.89999999999999 6.8 124.39999999999999V106.2Q6.8 102.7 10.3 102.7Z" fill="#e6e6e6" stroke="none"/><path d="M77.4 102.7H10.3Q6.8 102.7 6.8 106.2V124.39999999999999Q6.8 127.89999999999999 10.3 127.89999999999999H77.4M32.9 102.7V127.89999999999999" fill="none" stroke="#1e1e1e" stroke-width="2" stroke-linejoin="round"/><path d="M76.80000000000001 102.3L84.2 115.3L76.80000000000001 128.29999999999998" fill="none" stroke="#1e1e1e" stroke-width="1.24" stroke-linejoin="round"/>
<path d="M10.3 219.9H77.4L83.9 232.5L77.4 245.1H10.3Q6.8 245.1 6.8 241.6V223.4Q6.8 219.9 10.3 219.9Z" fill="#e6f7f8" stroke="none"/><path d="M77.4 219.9H10.3Q6.8 219.9 6.8 223.4V241.6Q6.8 245.1 10.3 245.1H77.4M32.9 219.9V245.1" fill="none" stroke="#1fc3cb" stroke-width="2" stroke-linejoin="round"/><path d="M76.80000000000001 219.5L84.2 232.5L76.80000000000001 245.5" fill="none" stroke="#1fc3cb" stroke-width="1.24" stroke-linejoin="round"/>
<path d="M10.1 337.6H30.5L42 350L30.5 362.4H10.1Q6.6 362.4 6.6 358.9V341.1Q6.6 337.6 10.1 337.6Z" fill="#fde9ed" stroke="#f2607e" stroke-width="1.5" stroke-linejoin="round"/>
<path d="M10.3 453.7H77.4L83.9 466.3L77.4 478.90000000000003H10.3Q6.8 478.90000000000003 6.8 475.40000000000003V457.2Q6.8 453.7 10.3 453.7Z" fill="#f2f8e8" stroke="none"/><path d="M77.4 453.7H10.3Q6.8 453.7 6.8 457.2V475.40000000000003Q6.8 478.90000000000003 10.3 478.90000000000003H77.4M32.9 453.7V478.90000000000003" fill="none" stroke="#86c832" stroke-width="2" stroke-linejoin="round"/><path d="M76.80000000000001 453.3L84.2 466.3L76.80000000000001 479.3" fill="none" stroke="#86c832" stroke-width="1.24" stroke-linejoin="round"/>
<path d="M10.1 571.6H30.5L42 584L30.5 596.4H10.1Q6.6 596.4 6.6 592.9V575.1Q6.6 571.6 10.1 571.6Z" fill="#fdf2e6" stroke="#ffa448" stroke-width="1.5" stroke-linejoin="round"/>
<path d="M10.3 687.9H77.4L83.9 700.5L77.4 713.1H10.3Q6.8 713.1 6.8 709.6V691.4Q6.8 687.9 10.3 687.9Z" fill="#e8e8f4" stroke="none"/><path d="M10.3 687.9H33V713.1H10.3Q6.8 713.1 6.8 709.6V691.4Q6.8 687.9 10.3 687.9Z" fill="#2424c0"/><path d="M77.4 687.9H10.3Q6.8 687.9 6.8 691.4V709.6Q6.8 713.1 10.3 713.1H77.4M32.9 687.9V713.1" fill="none" stroke="#000000" stroke-width="2" stroke-linejoin="round"/><path d="M76.80000000000001 687.5L84.2 700.5L76.80000000000001 713.5" fill="none" stroke="#000000" stroke-width="1.24" stroke-linejoin="round"/>
<g clip-path="url(#cm1)"><path d="M10.1 851.0H30.5L42 863.4L30.5 875.8H10.1Q6.6 875.8 6.6 872.3V854.5Q6.6 851.0 10.1 851.0Z" fill="#fdf0e2" stroke="#f5a04a" stroke-width="1.5" stroke-linejoin="round"/></g>
<path d="M10.1 959.2H30.5L42 971.6L30.5 984.0H10.1Q6.6 984.0 6.6 980.5V962.7Q6.6 959.2 10.1 959.2Z" fill="#efe6f4" stroke="#9856b8" stroke-width="1.5" stroke-linejoin="round"/>
<path d="M45 58H66L55.5 68.3Z" fill="#f78d1e"/>
<path d="M45.3 643.4H65V663.7H60.2L55.2 670.8L50.2 663.7H45.3Z" fill="#f78d1e"/>
<path d="M47.6 645.4H63V661.4H58.8L55.2 665.6L51.7 661.4H47.6Z" fill="#000"/>
<path d="M1730.4 700.3L1742 690.4V698.4H1751V702.4H1742V710.4Z" fill="#2424c0"/>
<path d="M1711.5 64.6H1743Q1745.6 64.6 1745.6 67.2V97.5Q1745.6 99.8 1743.6 98.2L1710.6 66.6Q1709.2 64.6 1711.5 64.6Z" fill="#4e4e4e" stroke="#1a1a1a" stroke-width="1"/>
<circle cx="1736.9" cy="71.8" r="3.6" fill="none" stroke="#a8a8a8" stroke-width="1.4"/>
<path d="M1734.3 74.6L1728.3 80.8" stroke="#a8a8a8" stroke-width="2.2" stroke-linecap="round"/>
</svg>
<span class="t" style="left:11px;top:109px;font:normal 12px/12px 'Liberation Sans',sans-serif;color:#000;letter-spacing:-0.9px;-webkit-text-stroke:0.2px #000;">C 1</span>
<span class="t" style="left:45px;top:109px;font:normal 12px/12px 'Liberation Sans',sans-serif;color:#000;letter-spacing:-0.06px;-webkit-text-stroke:0.2px #000;">20 V</span>
<span class="t" style="left:11px;top:226px;font:normal 12px/12px 'Liberation Sans',sans-serif;color:#000;letter-spacing:-0.8px;-webkit-text-stroke:0.35px #000;">C 2</span>
<span class="t" style="left:36px;top:226px;font:normal 12px/12px 'Liberation Sans',sans-serif;color:#000;letter-spacing:-0.06px;-webkit-text-stroke:0.35px #000;">300 mV</span>
<span class="t" style="left:15px;top:344px;font:normal 12px/12px 'Liberation Sans',sans-serif;color:#f0507a;letter-spacing:-1.1px;">C 3</span>
<span class="t" style="left:11px;top:460px;font:normal 12px/12px 'Liberation Sans',sans-serif;color:#000;letter-spacing:-0.7px;-webkit-text-stroke:0.35px #000;">C 4</span>
<span class="t" style="left:36px;top:460px;font:normal 12px/12px 'Liberation Sans',sans-serif;color:#000;letter-spacing:0.08px;-webkit-text-stroke:0.35px #000;">200 mV</span>
<span class="t" style="left:15px;top:578px;font:normal 12px/12px 'Liberation Sans',sans-serif;color:#000;letter-spacing:-0.7px;-webkit-text-stroke:0.3px #000;">C 5</span>
<span class="t" style="left:11px;top:694px;font:normal 12px/12px 'Liberation Sans',sans-serif;color:#fff;letter-spacing:-0.7px;">C 6</span>
<span class="t" style="left:48px;top:694px;font:normal 12px/12px 'Liberation Sans',sans-serif;color:#2424c0;letter-spacing:0.15px;">3 V</span>
<span class="t" style="left:12px;top:857px;font:normal 12px/12px 'Liberation Sans',sans-serif;color:#000;letter-spacing:0.35px;-webkit-text-stroke:0.2px #000;">M 1</span>
<span class="t" style="left:12px;top:966px;font:normal 12px/12px 'Liberation Sans',sans-serif;color:#8a48a8;letter-spacing:1.2px;">M 2</span>
<span class="t" style="left:51px;top:649px;font:bold 13px/13px 'DejaVu Sans',sans-serif;color:#f78d1e;">T</span>
<span class="t" style="left:600px;top:43px;font:bold 10px/10px 'DejaVu Sans',sans-serif;color:#f78d1e;">T</span>
<div style="left:1769px;top:29px;width:160px;height:967px;border:1px solid #665f59;border-left-color:#595b5d;box-sizing:border-box;"></div>
<div style="left:1760px;top:501.8px;width:4px;height:4px;background:#c4c4c4;border-radius:2px;"></div>
<div style="left:1760px;top:510.29999999999995px;width:4px;height:4px;background:#c4c4c4;border-radius:2px;"></div>
<div style="left:1760px;top:518.8px;width:4px;height:4px;background:#c4c4c4;border-radius:2px;"></div>
<span class="t" style="left:1802px;top:31px;font:bold 15.5px/15.5px 'Liberation Sans',sans-serif;color:#f0f0f0;letter-spacing:0.78px;-webkit-text-stroke:0.3px #f0f0f0;">Add New...</span>
<div class="btn" style="left:1778px;top:54px;width:63px;height:37px;"></div>
<span class="t" style="left:1785px;top:64px;font:normal 15px/15px 'Liberation Sans',sans-serif;color:#f4f4f4;letter-spacing:-0.26px;">Cursors</span>
<div class="btn" style="left:1850px;top:54px;width:63px;height:37px;"></div>
<span class="t" style="left:1856px;top:64px;font:normal 15px/15px 'Liberation Sans',sans-serif;color:#f4f4f4;letter-spacing:0.42px;">Callout</span>
<div class="btn" style="left:1778px;top:100px;width:63px;height:37px;"></div>
<span class="t" style="left:1779px;top:110px;font:normal 15px/15px 'Liberation Sans',sans-serif;color:#f4f4f4;letter-spacing:0.15px;">Measure</span>
<div class="btn" style="left:1850px;top:100px;width:63px;height:37px;"></div>
<span class="t" style="left:1857px;top:110px;font:normal 15px/15px 'Liberation Sans',sans-serif;color:#f4f4f4;letter-spacing:0.04px;">Search</span>
<div class="btn" style="left:1778px;top:146px;width:63px;height:37px;"></div>
<div class="btn" style="left:1850px;top:146px;width:63px;height:37px;"></div>
<span class="t" style="left:1866px;top:156px;font:normal 15px/15px 'Liberation Sans',sans-serif;color:#f4f4f4;letter-spacing:1.09px;">Plot</span>
<div class="btn" style="left:1778px;top:196px;width:63px;height:37px;"></div>
<div class="btn" style="left:1850px;top:196px;width:63px;height:37px;"></div>
<span class="t" style="left:1856px;top:206px;font:normal 15px/15px 'Liberation Sans',sans-serif;color:#f4f4f4;letter-spacing:0.83px;">More...</span>
<span class="t" style="left:1784px;top:148px;font:normal 15px/15px 'Liberation Sans',sans-serif;color:#f4f4f4;letter-spacing:-0.22px;">Results</span>
<span class="t" style="left:1792px;top:164px;font:normal 15px/15px 'Liberation Sans',sans-serif;color:#f4f4f4;letter-spacing:0.16px;">Table</span>
<div style="left:1773px;top:189px;width:144px;height:1px;background:#5d5650;"></div>
<div style="left:1773px;top:241px;width:144px;height:1px;background:#5d5650;"></div>
<svg class="abs" style="left:0;top:0;width:1920px;height:260px" viewBox="0 0 1920 260"><rect x="1797.1" y="202" width="3" height="2.1" fill="#c9c9c9"/><rect x="1803.1" y="202" width="4.6" height="2.1" fill="#c9c9c9"/><rect x="1810.3" y="202" width="4.6" height="2.1" fill="#c9c9c9"/><rect x="1817.2" y="202" width="3.7" height="2.1" fill="#c9c9c9"/><rect x="1797.1" y="221" width="3" height="2.1" fill="#c9c9c9"/><rect x="1803.1" y="221" width="4.6" height="2.1" fill="#c9c9c9"/><rect x="1810.3" y="221" width="4.6" height="2.1" fill="#c9c9c9"/><rect x="1797.1" y="202" width="2.1" height="2.9" fill="#c9c9c9"/><rect x="1797.1" y="207.6" width="2.1" height="3.3" fill="#c9c9c9"/><rect x="1797.1" y="213.6" width="2.1" height="3.5" fill="#c9c9c9"/><rect x="1797.1" y="219.9" width="2.1" height="3.1" fill="#c9c9c9"/><rect x="1818.8" y="202" width="2.1" height="2.9" fill="#c9c9c9"/><rect x="1818.8" y="207.6" width="2.1" height="3.3" fill="#c9c9c9"/><rect x="1818.8" y="213.6" width="2.1" height="3.5" fill="#c9c9c9"/><circle cx="1811" cy="210.8" r="4.45" fill="#2b2b2b" stroke="#c9c9c9" stroke-width="1.6"/><path d="M1807.3 214.2L1803.2 217.5" stroke="#c9c9c9" stroke-width="2.7" stroke-linecap="round"/><path d="M1815.1 217.2L1823.5 221.8L1820.3 222.7L1823.1 226.2L1821.2 227.1L1818.8 223.8L1817 226.4Z" fill="#c9c9c9"/></svg>
<div style="left:3px;top:984px;width:90px;height:95px;background:#c9c9c9;border-radius:4px;overflow:hidden;"><div style="position:absolute;left:0;top:0;width:90px;height:18.6px;background:#1c1c1c"></div><div style="position:absolute;left:0;top:18.6px;width:90px;height:2.6px;background:#a2a2a2"></div><div style="position:absolute;left:0;top:21.2px;width:90px;height:16.6px;background:#ff0000"></div></div>
<span class="t" style="left:9px;top:986px;font:normal 14px/14px 'Liberation Sans',sans-serif;color:#f4e63a;letter-spacing:-0.13px;-webkit-text-stroke:0.3px #f4e63a;">Ch 1</span>
<svg class="abs" style="left:3.2px;top:1005.2px;width:17px;height:17px" viewBox="0 0 17 17"><path d="M8 1.2L15.2 15.2H0.8Z" fill="#ffee00" stroke="#4a3a6a" stroke-width="0.9" stroke-linejoin="round"/><path d="M8 5.4V11.2M8 12.6V13.8" stroke="#7a7a20" stroke-width="1.5"/></svg>
<span class="t" style="left:20px;top:1005px;font:normal 15px/15px 'Liberation Sans',sans-serif;color:#fff;letter-spacing:0.48px;">Clipping</span>
<span class="t" style="left:8px;top:1025px;font:normal 14px/14px 'Liberation Sans',sans-serif;color:#0a0a0a;letter-spacing:-0.02px;">5 V/div</span>
<span class="t" style="left:8px;top:1044px;font:normal 14px/14px 'Liberation Sans',sans-serif;color:#0a0a0a;letter-spacing:0.76px;">1 MΩ</span>
<span class="t" style="left:8px;top:1062px;font:normal 14px/14px 'Liberation Sans',sans-serif;color:#0a0a0a;letter-spacing:0.2px;">200 kHz</span>
<span class="t" style="left:75px;top:1062px;font:bold 9px/9px 'Liberation Sans',sans-serif;color:#111;">B</span><span class="t" style="left:80px;top:1065px;font:bold 9px/9px 'Liberation Sans',sans-serif;color:#111;">w</span>
<div style="left:98px;top:984px;width:90px;height:95px;background:#c9c9c9;border-radius:4px;overflow:hidden;"><div style="position:absolute;left:0;top:0;width:90px;height:18.6px;background:#1d4044"></div><div style="position:absolute;left:0;top:18.6px;width:90px;height:2.6px;background:#a2a2a2"></div><div style="position:absolute;left:0;top:21.2px;width:90px;height:16.6px;background:#ff0000"></div></div>
<span class="t" style="left:104px;top:986px;font:normal 14px/14px 'Liberation Sans',sans-serif;color:#2ad2da;letter-spacing:-0.13px;-webkit-text-stroke:0.3px #2ad2da;">Ch 2</span>
<svg class="abs" style="left:98.2px;top:1005.2px;width:17px;height:17px" viewBox="0 0 17 17"><path d="M8 1.2L15.2 15.2H0.8Z" fill="#ffee00" stroke="#4a3a6a" stroke-width="0.9" stroke-linejoin="round"/><path d="M8 5.4V11.2M8 12.6V13.8" stroke="#7a7a20" stroke-width="1.5"/></svg>
<span class="t" style="left:115px;top:1005px;font:normal 15px/15px 'Liberation Sans',sans-serif;color:#fff;letter-spacing:0.48px;">Clipping</span>
<span class="t" style="left:103px;top:1025px;font:normal 14px/14px 'Liberation Sans',sans-serif;color:#0a0a0a;letter-spacing:0.3px;">250 mV/div</span>
<span class="t" style="left:103px;top:1044px;font:normal 14px/14px 'Liberation Sans',sans-serif;color:#0a0a0a;letter-spacing:0.76px;">1 MΩ</span>
<span class="t" style="left:104px;top:1062px;font:normal 14px/14px 'Liberation Sans',sans-serif;color:#0a0a0a;letter-spacing:0.2px;">200 kHz</span>
<span class="t" style="left:170px;top:1062px;font:bold 9px/9px 'Liberation Sans',sans-serif;color:#111;">B</span><span class="t" style="left:175px;top:1065px;font:bold 9px/9px 'Liberation Sans',sans-serif;color:#111;">w</span>
<div style="left:193px;top:984px;width:90px;height:95px;background:#c9c9c9;border-radius:4px;overflow:hidden;"><div style="position:absolute;left:0;top:0;width:90px;height:18.6px;background:#45262b"></div><div style="position:absolute;left:0;top:18.6px;width:90px;height:2.6px;background:#a2a2a2"></div><div style="position:absolute;left:0;top:21.2px;width:90px;height:16.6px;background:#ff0000"></div></div>
<span class="t" style="left:199px;top:986px;font:normal 14px/14px 'Liberation Sans',sans-serif;color:#f4f4f4;letter-spacing:-0.13px;-webkit-text-stroke:0.3px #f4f4f4;">Ch 3</span>
<svg class="abs" style="left:193.2px;top:1005.2px;width:17px;height:17px" viewBox="0 0 17 17"><path d="M8 1.2L15.2 15.2H0.8Z" fill="#ffee00" stroke="#4a3a6a" stroke-width="0.9" stroke-linejoin="round"/><path d="M8 5.4V11.2M8 12.6V13.8" stroke="#7a7a20" stroke-width="1.5"/></svg>
<span class="t" style="left:210px;top:1005px;font:normal 15px/15px 'Liberation Sans',sans-serif;color:#fff;letter-spacing:0.48px;">Clipping</span>
<span class="t" style="left:198px;top:1025px;font:normal 14px/14px 'Liberation Sans',sans-serif;color:#0a0a0a;letter-spacing:0.3px;">450 mV/div</span>
<span class="t" style="left:198px;top:1044px;font:normal 14px/14px 'Liberation Sans',sans-serif;color:#0a0a0a;letter-spacing:0.76px;">1 MΩ</span>
<span class="t" style="left:198px;top:1062px;font:normal 14px/14px 'Liberation Sans',sans-serif;color:#0a0a0a;letter-spacing:0.2px;">200 kHz</span>
<span class="t" style="left:265px;top:1062px;font:bold 9px/9px 'Liberation Sans',sans-serif;color:#111;">B</span><span class="t" style="left:270px;top:1065px;font:bold 9px/9px 'Liberation Sans',sans-serif;color:#111;">w</span>
<div style="left:288px;top:1003px;width:90px;height:76px;background:#c9c9c9;border-radius:4px;overflow:hidden;"><div style="position:absolute;left:0;top:0;width:90px;height:19px;background:#3a4021"></div><div style="position:absolute;left:0;top:19px;width:90px;height:2px;background:#b0b0b0"></div></div>
<span class="t" style="left:294px;top:1004px;font:normal 14px/14px 'Liberation Sans',sans-serif;color:#8fd02f;letter-spacing:-0.13px;-webkit-text-stroke:0.3px #8fd02f;">Ch 4</span>
<span class="t" style="left:293px;top:1025px;font:normal 14px/14px 'Liberation Sans',sans-serif;color:#0a0a0a;letter-spacing:0.3px;">200 mV/div</span>
<span class="t" style="left:293px;top:1044px;font:normal 14px/14px 'Liberation Sans',sans-serif;color:#0a0a0a;letter-spacing:0.76px;">1 MΩ</span>
<span class="t" style="left:294px;top:1062px;font:normal 14px/14px 'Liberation Sans',sans-serif;color:#0a0a0a;letter-spacing:0.2px;">200 kHz</span>
<span class="t" style="left:360px;top:1062px;font:bold 9px/9px 'Liberation Sans',sans-serif;color:#111;">B</span><span class="t" style="left:365px;top:1065px;font:bold 9px/9px 'Liberation Sans',sans-serif;color:#111;">w</span>
<div style="left:383px;top:1003px;width:90px;height:76px;background:#c9c9c9;border-radius:4px;overflow:hidden;"><div style="position:absolute;left:0;top:0;width:90px;height:19px;background:#4a3320"></div><div style="position:absolute;left:0;top:19px;width:90px;height:2px;background:#b0b0b0"></div></div>
<span class="t" style="left:389px;top:1004px;font:normal 14px/14px 'Liberation Sans',sans-serif;color:#f6a040;letter-spacing:-0.13px;-webkit-text-stroke:0.3px #f6a040;">Ch 5</span>
<span class="t" style="left:388px;top:1025px;font:normal 14px/14px 'Liberation Sans',sans-serif;color:#0a0a0a;letter-spacing:0.13px;">1 V/div</span>
<span class="t" style="left:388px;top:1044px;font:normal 14px/14px 'Liberation Sans',sans-serif;color:#0a0a0a;letter-spacing:0.76px;">1 MΩ</span>
<span class="t" style="left:388px;top:1062px;font:normal 14px/14px 'Liberation Sans',sans-serif;color:#0a0a0a;letter-spacing:0.2px;">200 kHz</span>
<span class="t" style="left:455px;top:1062px;font:bold 9px/9px 'Liberation Sans',sans-serif;color:#111;">B</span><span class="t" style="left:460px;top:1065px;font:bold 9px/9px 'Liberation Sans',sans-serif;color:#111;">w</span>
<div style="left:478px;top:984px;width:90px;height:95px;background:#c9c9c9;border-radius:4px;overflow:hidden;"><div style="position:absolute;left:0;top:0;width:90px;height:18.6px;background:#2626c2"></div><div style="position:absolute;left:0;top:18.6px;width:90px;height:2.6px;background:#a2a2a2"></div><div style="position:absolute;left:0;top:21.2px;width:90px;height:16.6px;background:#ff0000"></div></div>
<span class="t" style="left:484px;top:986px;font:normal 14px/14px 'Liberation Sans',sans-serif;color:#ffffff;letter-spacing:-0.13px;-webkit-text-stroke:0.3px #ffffff;">Ch 6</span>
<svg class="abs" style="left:478.2px;top:1005.2px;width:17px;height:17px" viewBox="0 0 17 17"><path d="M8 1.2L15.2 15.2H0.8Z" fill="#ffee00" stroke="#4a3a6a" stroke-width="0.9" stroke-linejoin="round"/><path d="M8 5.4V11.2M8 12.6V13.8" stroke="#7a7a20" stroke-width="1.5"/></svg>
<span class="t" style="left:495px;top:1005px;font:normal 15px/15px 'Liberation Sans',sans-serif;color:#fff;letter-spacing:0.48px;">Clipping</span>
<span class="t" style="left:483px;top:1025px;font:normal 14px/14px 'Liberation Sans',sans-serif;color:#0a0a0a;letter-spacing:0.3px;">750 mV/div</span>
<span class="t" style="left:483px;top:1044px;font:normal 14px/14px 'Liberation Sans',sans-serif;color:#0a0a0a;letter-spacing:0.76px;">1 MΩ</span>
<span class="t" style="left:484px;top:1062px;font:normal 14px/14px 'Liberation Sans',sans-serif;color:#0a0a0a;letter-spacing:0.2px;">200 kHz</span>
<span class="t" style="left:550px;top:1062px;font:bold 9px/9px 'Liberation Sans',sans-serif;color:#111;">B</span><span class="t" style="left:555px;top:1065px;font:bold 9px/9px 'Liberation Sans',sans-serif;color:#111;">w</span>
<div style="left:573px;top:984px;width:90px;height:95px;background:#c9c9c9;border-radius:4px;overflow:hidden;"><div style="position:absolute;left:0;top:0;width:90px;height:18.6px;background:#4a3320"></div><div style="position:absolute;left:0;top:18.6px;width:90px;height:2.6px;background:#a2a2a2"></div><div style="position:absolute;left:0;top:21.2px;width:90px;height:16.6px;background:#ff0000"></div></div>
<span class="t" style="left:578px;top:986px;font:normal 14px/14px 'Liberation Sans',sans-serif;color:#f59a26;letter-spacing:1.24px;-webkit-text-stroke:0.3px #f59a26;">Math 1</span>
<svg class="abs" style="left:573.2px;top:1005.2px;width:17px;height:17px" viewBox="0 0 17 17"><path d="M8 1.2L15.2 15.2H0.8Z" fill="#ffee00" stroke="#4a3a6a" stroke-width="0.9" stroke-linejoin="round"/><path d="M8 5.4V11.2M8 12.6V13.8" stroke="#7a7a20" stroke-width="1.5"/></svg>
<span class="t" style="left:589px;top:1005px;font:normal 15px/15px 'Liberation Sans',sans-serif;color:#fff;letter-spacing:0.46px;">Empty i…</span>
<span class="t" style="left:579px;top:1025px;font:bold 14px/14px 'Liberation Sans',sans-serif;color:#0a0a0a;letter-spacing:0.5px;">73.2 mT/div</span>
<span class="t" style="left:578px;top:1044px;font:normal 14px/14px 'Liberation Sans',sans-serif;color:#0a0a0a;letter-spacing:0.32px;">Intg(Ch2)…</span>
<div style="left:668px;top:984px;width:90px;height:95px;background:#c9c9c9;border-radius:4px;overflow:hidden;"><div style="position:absolute;left:0;top:0;width:90px;height:18.6px;background:#2c2036"></div><div style="position:absolute;left:0;top:18.6px;width:90px;height:2.6px;background:#a2a2a2"></div><div style="position:absolute;left:0;top:21.2px;width:90px;height:16.6px;background:#ff0000"></div></div>
<span class="t" style="left:673px;top:986px;font:normal 14px/14px 'Liberation Sans',sans-serif;color:#ffffff;letter-spacing:1.6px;-webkit-text-stroke:0.3px #ffffff;">Math 2</span>
<svg class="abs" style="left:668.2px;top:1005.2px;width:17px;height:17px" viewBox="0 0 17 17"><path d="M8 1.2L15.2 15.2H0.8Z" fill="#ffee00" stroke="#4a3a6a" stroke-width="0.9" stroke-linejoin="round"/><path d="M8 5.4V11.2M8 12.6V13.8" stroke="#7a7a20" stroke-width="1.5"/></svg>
<span class="t" style="left:684px;top:1005px;font:normal 15px/15px 'Liberation Sans',sans-serif;color:#fff;letter-spacing:0.46px;">Empty i…</span>
<span class="t" style="left:673px;top:1025px;font:bold 14px/14px 'Liberation Sans',sans-serif;color:#0a0a0a;letter-spacing:0.84px;">605.68 A/…</span>
<span class="t" style="left:673px;top:1044px;font:normal 14px/14px 'Liberation Sans',sans-serif;color:#0a0a0a;letter-spacing:0.39px;">-Intg(Ch3…</span>
<div style="left:1118px;top:1000px;width:1px;height:78px;background:#5d5650;"></div>
<div style="left:1269px;top:1000px;width:1px;height:78px;background:#5d5650;"></div>
<div style="left:1811px;top:1000px;width:1px;height:78px;background:#5d5650;"></div>
<div class="btn" style="left:1129px;top:999px;width:40px;height:80px;border-radius:7px;"></div>
<div style="left:1133.2px;top:1007px;width:31.6px;height:2.2px;background:#c6282d;border-radius:1px;"></div>
<span class="t" style="left:1136px;top:1020px;font:normal 15px/15px 'Liberation Sans',sans-serif;color:#f4f4f4;letter-spacing:0.05px;">Add</span>
<span class="t" style="left:1133px;top:1036px;font:normal 15px/15px 'Liberation Sans',sans-serif;color:#f4f4f4;letter-spacing:0.15px;">New</span>
<span class="t" style="left:1132px;top:1052px;font:normal 15px/15px 'Liberation Sans',sans-serif;color:#f4f4f4;letter-spacing:0.24px;">Math</span>
<div class="btn" style="left:1174px;top:999px;width:40px;height:80px;border-radius:7px;"></div>
<div style="left:1178.2px;top:1007px;width:31.6px;height:2.2px;background:#c6c6de;border-radius:1px;"></div>
<span class="t" style="left:1181px;top:1020px;font:normal 15px/15px 'Liberation Sans',sans-serif;color:#f4f4f4;letter-spacing:0.05px;">Add</span>
<span class="t" style="left:1178px;top:1036px;font:normal 15px/15px 'Liberation Sans',sans-serif;color:#f4f4f4;letter-spacing:0.15px;">New</span>
<span class="t" style="left:1182px;top:1052px;font:normal 15px/15px 'Liberation Sans',sans-serif;color:#f4f4f4;letter-spacing:-1.05px;">Ref</span>
<div class="btn" style="left:1219px;top:999px;width:40px;height:80px;border-radius:7px;"></div>
<div style="left:1223.2px;top:1007px;width:31.6px;height:2.2px;background:#c264ff;border-radius:1px;"></div>
<span class="t" style="left:1226px;top:1020px;font:normal 15px/15px 'Liberation Sans',sans-serif;color:#f4f4f4;letter-spacing:0.05px;">Add</span>
<span class="t" style="left:1223px;top:1036px;font:normal 15px/15px 'Liberation Sans',sans-serif;color:#f4f4f4;letter-spacing:0.15px;">New</span>
<span class="t" style="left:1227px;top:1052px;font:normal 15px/15px 'Liberation Sans',sans-serif;color:#f4f4f4;letter-spacing:-1.45px;">Bus</span>
<div style="left:1280px;top:1003px;width:200px;height:76px;background:#141414;border-radius:5px;"></div>
<div style="left:1281px;top:1004px;width:198px;height:74px;background:linear-gradient(#58585a 0,#58585a 18.6px,#a6a6a6 18.6px,#a6a6a6 21px,#c9c9c9 21px);border-radius:4px;"></div>
<span class="t" style="left:1285px;top:1005px;font:normal 15px/15px 'Liberation Sans',sans-serif;color:#f2f2f2;letter-spacing:0.79px;">Horizontal</span>
<span class="t" style="left:1285px;top:1025px;font:normal 14px/14px 'Liberation Sans',sans-serif;color:#0a0a0a;letter-spacing:0.18px;">4 ms/div</span>
<span class="t" style="left:1391px;top:1025px;font:normal 14px/14px 'Liberation Sans',sans-serif;color:#0a0a0a;letter-spacing:0.16px;">40 ms</span>
<span class="t" style="left:1284px;top:1044px;font:normal 14px/14px 'Liberation Sans',sans-serif;color:#0a0a0a;letter-spacing:-0.27px;">SR: 1 MS/s</span>
<span class="t" style="left:1391px;top:1044px;font:normal 14px/14px 'Liberation Sans',sans-serif;color:#0a0a0a;letter-spacing:0.19px;">1 µs/pt</span>
<span class="t" style="left:1284px;top:1063px;font:normal 14px/14px 'Liberation Sans',sans-serif;color:#0a0a0a;letter-spacing:0.09px;">RL: 40 kpts</span>
<span class="t" style="left:1405px;top:1063px;font:normal 14px/14px 'Liberation Sans',sans-serif;color:#0a0a0a;letter-spacing:1.8px;">3%</span>
<svg class="abs" style="left:1389px;top:1061px;width:14px;height:16px" viewBox="0 0 14 16"><path d="M2 2H11.2V11H8.4L6.6 13.8L4.8 11H2Z" fill="#f78d1e"/><path d="M3.2 3.2H10V9.8H7.8L6.6 11.4L5.4 9.8H3.2Z" fill="#000"/><path d="M4.4 4.6H8.8M6.6 4.6V9" stroke="#fff" stroke-width="1.3"/></svg>
<div style="left:1485px;top:1003px;width:160px;height:76px;background:#141414;border-radius:5px;"></div>
<div style="left:1486px;top:1004px;width:158px;height:74px;background:linear-gradient(#58585a 0,#58585a 18.6px,#a6a6a6 18.6px,#a6a6a6 21px,#c9c9c9 21px);border-radius:4px;"></div>
<span class="t" style="left:1491px;top:1005px;font:normal 15px/15px 'Liberation Sans',sans-serif;color:#f2f2f2;letter-spacing:0.43px;">Trigger</span>
<div style="left:1490.2px;top:1025.3px;width:29.6px;height:15.4px;background:#2525c0;border:1px solid #0a0a0a;border-radius:6px;box-sizing:border-box;"></div>
<span class="t" style="left:1501px;top:1025px;font:normal 14px/14px 'Liberation Sans',sans-serif;color:#fff;">6</span>
<svg class="abs" style="left:1528px;top:1024px;width:22px;height:16px" viewBox="0 0 22 16"><path d="M2 13H6.4L13.4 3.6H18.2" fill="none" stroke="#2c2c8c" stroke-width="1.1"/></svg>
<span class="t" style="left:1556px;top:1025px;font:normal 14px/14px 'Liberation Sans',sans-serif;color:#0a0a0a;letter-spacing:-0.35px;">3 V</span>
<div style="left:1650px;top:1003px;width:150px;height:76px;background:#141414;border-radius:5px;"></div>
<div style="left:1651px;top:1004px;width:148px;height:74px;background:linear-gradient(#58585a 0,#58585a 18.6px,#a6a6a6 18.6px,#a6a6a6 21px,#c9c9c9 21px);border-radius:4px;"></div>
<span class="t" style="left:1656px;top:1005px;font:normal 15px/15px 'Liberation Sans',sans-serif;color:#f2f2f2;letter-spacing:0.49px;">Acquisition</span>
<span class="t" style="left:1654px;top:1025px;font:normal 14px/14px 'Liberation Sans',sans-serif;color:#0a0a0a;letter-spacing:0.48px;">Manual,</span>
<span class="t" style="left:1736px;top:1025px;font:normal 14px/14px 'Liberation Sans',sans-serif;color:#0a0a0a;letter-spacing:-0.02px;">Analyze</span>
<span class="t" style="left:1654px;top:1044px;font:normal 14px/14px 'Liberation Sans',sans-serif;color:#0a0a0a;letter-spacing:0.07px;">High Res: 16 bits</span>
<span class="t" style="left:1654px;top:1063px;font:normal 14px/14px 'Liberation Sans',sans-serif;color:#0a0a0a;letter-spacing:0.12px;">Single: 1 /1</span>
<div style="left:1822px;top:999.3px;width:90px;height:35.4px;background:#ff1c24;border:1px solid #6e7676;border-radius:7px;box-sizing:border-box;"></div>
<span class="t" style="left:1839px;top:1009px;font:bold 13px/13px 'Liberation Sans',sans-serif;color:#fff;letter-spacing:0.75px;">Stopped</span>
<div style="left:1822px;top:1040.4px;width:90px;height:38px;background:#c9c9c9;border-radius:6px;"></div>
<span class="t" style="left:1824px;top:1043px;font:normal 14.5px/14.5px 'Liberation Sans',sans-serif;color:#0a0a0a;letter-spacing:0.14px;">15 May 2025</span>
<span class="t" style="left:1830px;top:1060px;font:normal 14.5px/14.5px 'Liberation Sans',sans-serif;color:#0a0a0a;letter-spacing:-0.01px;">5:02:12 PM</span>
</body></html>
